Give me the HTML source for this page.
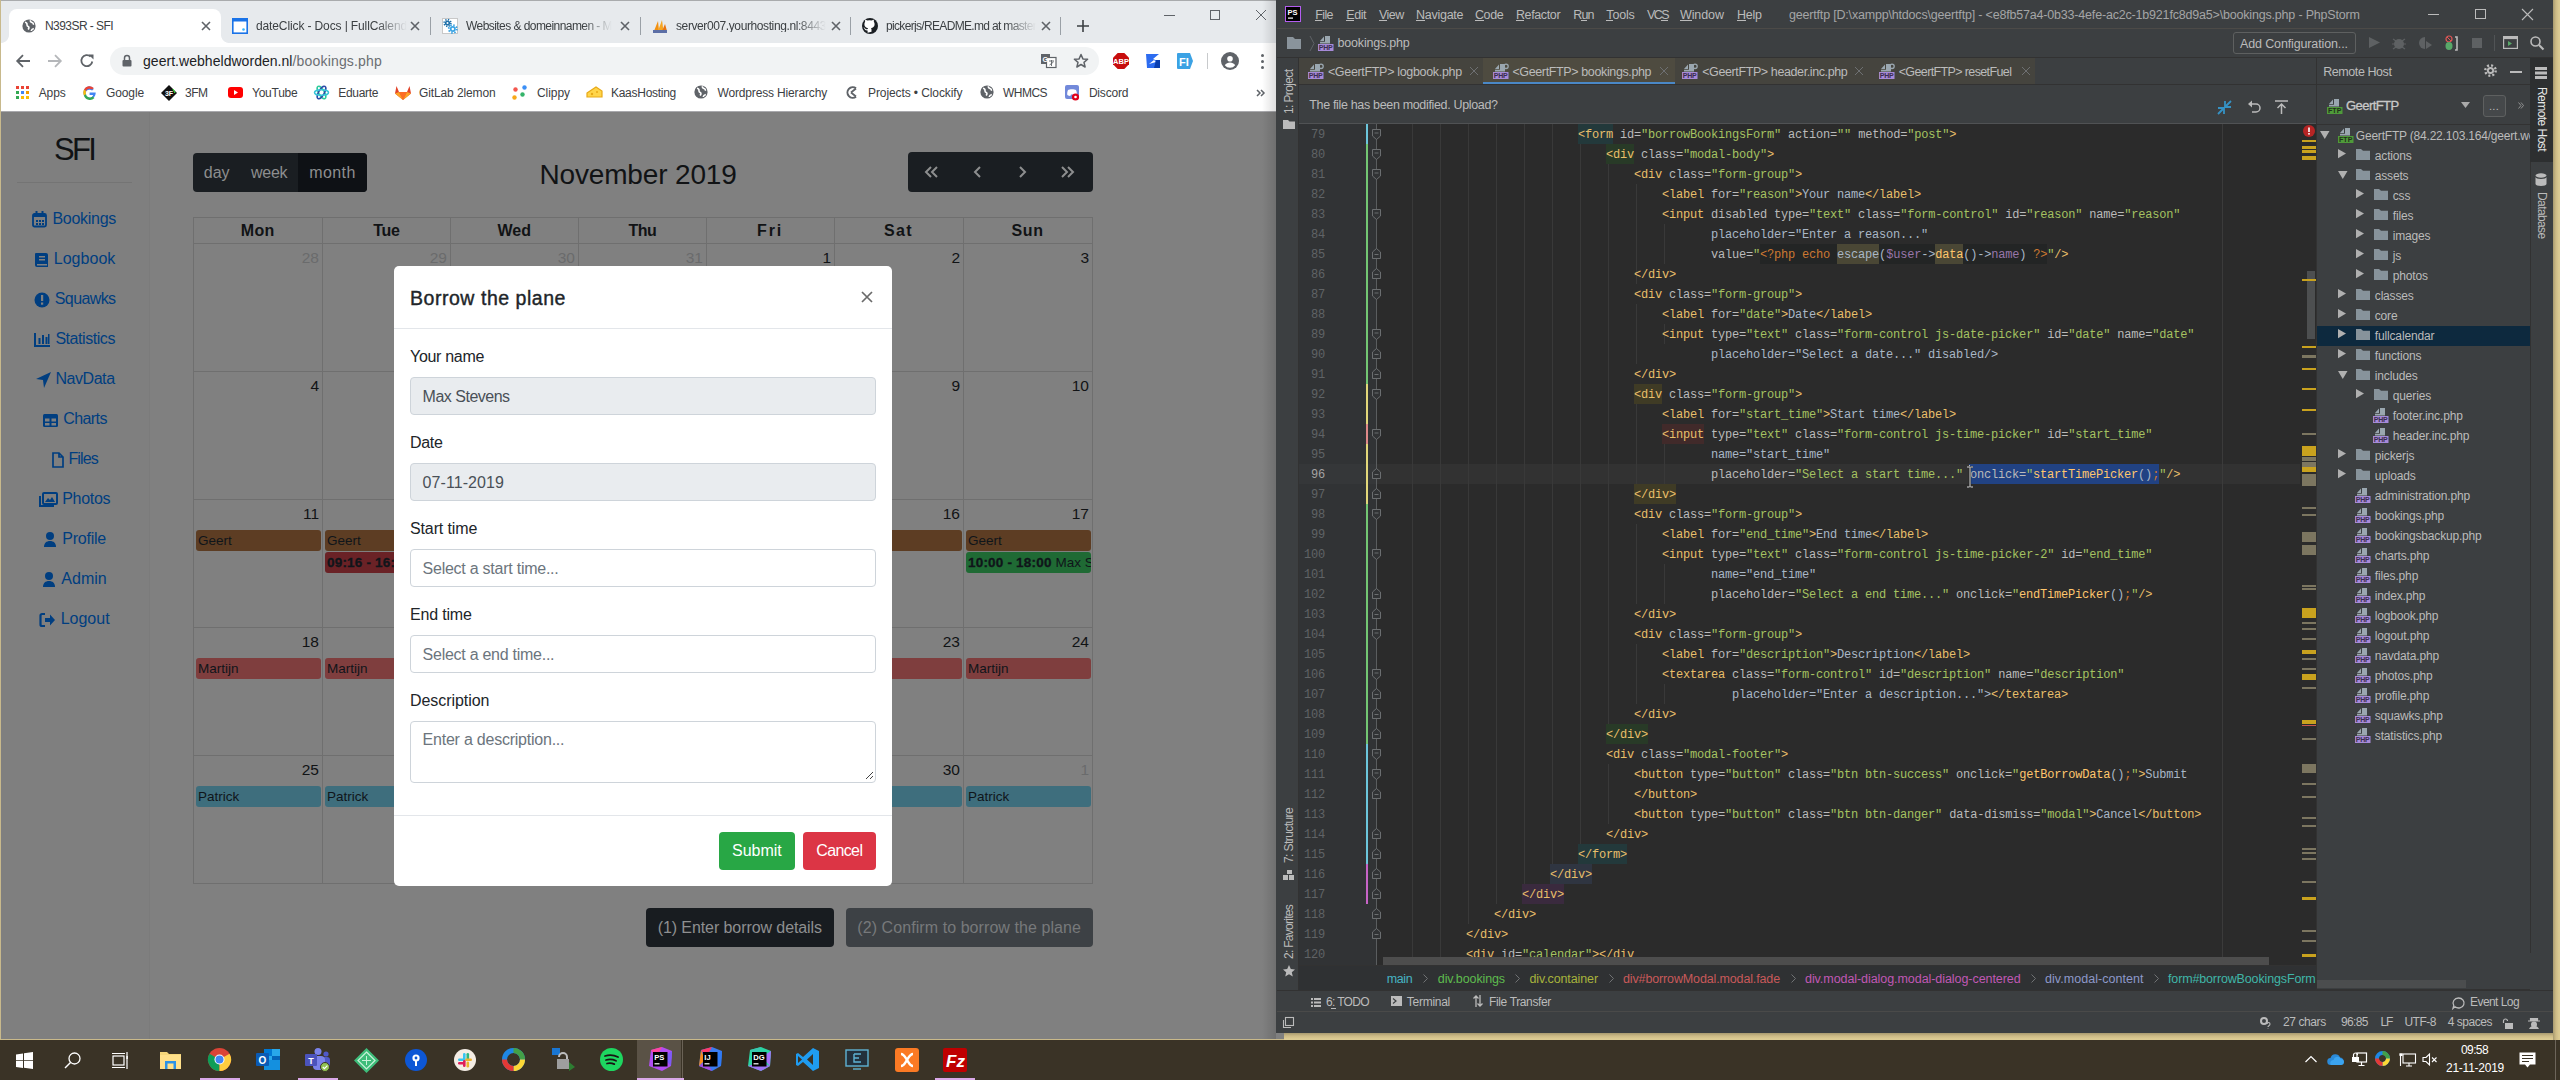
<!DOCTYPE html>
<html><head><meta charset="utf-8"><title>SFI</title>
<style>
html,body{margin:0;padding:0;width:2560px;height:1080px;overflow:hidden;background:#d8c690;font-family:"Liberation Sans",sans-serif}
*{box-sizing:border-box}
.a{position:absolute;white-space:pre}
.m{font-family:"Liberation Mono",monospace}
svg{position:absolute;overflow:visible}
</style></head><body>
<div style="position:absolute;left:1284px;top:1033px;width:1276px;height:7px;background:linear-gradient(180deg,#a89a6f,#cdbb86 3px,#dccb93 6px)"></div><div style="position:absolute;left:2553px;top:0;width:7px;height:1040px;background:linear-gradient(90deg,#a89a6f,#cdbb86 3px,#dccb93 6px)"></div><div id="chrome" style="position:absolute;left:0;top:0;width:1284px;height:1039px;background:#808080;overflow:hidden">
<div style="position:absolute;left:0px;top:0px;width:1284px;height:43px;background:#e7eaed"></div>
<div style="position:absolute;left:0px;top:0px;width:1284px;height:1px;background:#a9abad"></div>
<div style="position:absolute;left:0px;top:0px;width:1px;height:1039px;background:#c8b98c"></div>
<div style="position:absolute;left:9px;top:9px;width:212px;height:35px;background:#fff;border-radius:8px 8px 0 0"></div>
<div style="position:absolute;left:1px;top:35px;width:8px;height:8px;background:radial-gradient(circle at 0 0,#e7eaed 7.5px,#fff 8.3px)"></div>
<div style="position:absolute;left:221px;top:35px;width:8px;height:8px;background:radial-gradient(circle at 100% 0,#e7eaed 7.5px,#fff 8.3px)"></div>
<svg style="left:22px;top:19px;" width="14" height="14" viewBox="0 0 14 14"><circle cx="7" cy="7" r="6.6" fill="#5f6368"/><path d="M3 3.2c1.5.3 2.2 1.4 2 2.6-.2 1 .9 1.6 1.7 2.1.5.4.2 1.7-.6 2.6M8.5 1.2c-.3 1.3.4 2 1.5 2.3 1 .3 1.7 1.2 1.3 2.3M9.2 12c.2-1.4 1.2-2.2 2.6-2.6" fill="none" stroke="#fff" stroke-width="1.6"/></svg>
<div class="a" style="left:45.00px;top:19.84px;font-size:12px;line-height:1;color:#3c4043;letter-spacing:-0.558px;">N393SR - SFI</div>
<svg style="left:200.5px;top:21px;" width="10" height="10" viewBox="0 0 10 10"><path d="M1 1l8 8M9 1L1 9" stroke="#5f6368" stroke-width="1.6"/></svg>
<svg style="left:232px;top:18px;" width="16" height="16" viewBox="0 0 16 16"><rect x="0.8" y="0.8" width="14.4" height="14.4" fill="#fff" stroke="#1a73e8" stroke-width="1.6"/><rect x="0" y="0" width="16" height="3.5" fill="#1a73e8"/><circle cx="11.5" cy="11.5" r="1.3" fill="#33b5ff"/></svg>
<div class="a" style="left:256.00px;top:19.84px;font-size:12px;line-height:1;color:#3c4043;letter-spacing:-0.121px;width:151px;overflow:hidden;-webkit-mask-image:linear-gradient(90deg,#000 80%,transparent);">dateClick - Docs | FullCalend</div>
<svg style="left:410px;top:21px;" width="10" height="10" viewBox="0 0 10 10"><path d="M1 1l8 8M9 1L1 9" stroke="#5f6368" stroke-width="1.6"/></svg>
<div style="position:absolute;left:430px;top:17px;width:1px;height:18px;background:#9aa0a6"></div>
<svg style="left:442px;top:18px;" width="16" height="16" viewBox="0 0 16 16"><rect x="0.5" y="0.5" width="15" height="15" fill="#fff" stroke="#c8c8c8" stroke-width="1"/><circle cx="5.5" cy="5" r="2.6" fill="#1e6fa8"/><circle cx="5.5" cy="5" r="3.4" fill="none" stroke="#1e6fa8" stroke-width="1.6" stroke-dasharray="1.3 1.37"/><circle cx="5.5" cy="5" r="1" fill="#fff"/><circle cx="10.8" cy="11" r="3" fill="#3aa3e3"/><circle cx="10.8" cy="11" r="4" fill="none" stroke="#3aa3e3" stroke-width="1.8" stroke-dasharray="1.5 1.64"/><circle cx="10.8" cy="11" r="1.2" fill="#fff"/></svg>
<div class="a" style="left:466.00px;top:19.84px;font-size:12px;line-height:1;color:#3c4043;letter-spacing:-0.558px;width:146px;overflow:hidden;-webkit-mask-image:linear-gradient(90deg,#000 80%,transparent);">Websites &amp; domeinnamen - M</div>
<svg style="left:620px;top:21px;" width="10" height="10" viewBox="0 0 10 10"><path d="M1 1l8 8M9 1L1 9" stroke="#5f6368" stroke-width="1.6"/></svg>
<div style="position:absolute;left:640px;top:17px;width:1px;height:18px;background:#9aa0a6"></div>
<svg style="left:652px;top:18px;" width="16" height="16" viewBox="0 0 16 16"><path d="M2 13L6 3l1 10z" fill="#f29111"/><path d="M6 13l4-11 1.5 11z" fill="#f6a623"/><path d="M10 13l3-7 2 7z" fill="#e87511"/><rect x="1" y="12" width="14" height="3" fill="#5c6ea5"/></svg>
<div class="a" style="left:676.00px;top:19.84px;font-size:12px;line-height:1;color:#3c4043;letter-spacing:-0.395px;width:150px;overflow:hidden;-webkit-mask-image:linear-gradient(90deg,#000 80%,transparent);">server007.yourhosting.nl:8443</div>
<svg style="left:830.5px;top:21px;" width="10" height="10" viewBox="0 0 10 10"><path d="M1 1l8 8M9 1L1 9" stroke="#5f6368" stroke-width="1.6"/></svg>
<div style="position:absolute;left:850px;top:17px;width:1px;height:18px;background:#9aa0a6"></div>
<svg style="left:862px;top:18px;" width="16" height="16" viewBox="0 0 16 16"><circle cx="8" cy="8" r="8" fill="#1b1f23"/><path d="M5.6 14.8v-2.2c-2.3.2-2.8-1.3-2.8-1.3-.4-.9-.9-1.2-.9-1.2-.7-.5.1-.5.1-.5.8.1 1.2.8 1.2.8.7 1.2 1.9.9 2.4.7.1-.5.3-.9.5-1.1-1.8-.2-3.7-.9-3.7-4 0-.9.3-1.6.8-2.2-.1-.2-.4-1 .1-2.1 0 0 .7-.2 2.2.8a7.5 7.5 0 0 1 4 0c1.5-1 2.2-.8 2.2-.8.4 1.1.2 1.9.1 2.1.5.6.8 1.3.8 2.2 0 3.1-1.9 3.8-3.7 4 .3.3.6.8.6 1.5v2.2z" fill="#fff"/></svg>
<div class="a" style="left:886.00px;top:19.84px;font-size:12px;line-height:1;color:#3c4043;letter-spacing:-0.668px;width:150px;overflow:hidden;-webkit-mask-image:linear-gradient(90deg,#000 80%,transparent);">pickerjs/README.md at master</div>
<svg style="left:1040.5px;top:21px;" width="10" height="10" viewBox="0 0 10 10"><path d="M1 1l8 8M9 1L1 9" stroke="#5f6368" stroke-width="1.6"/></svg>
<div style="position:absolute;left:1060px;top:17px;width:1px;height:18px;background:#9aa0a6"></div>
<svg style="left:1077px;top:20px;" width="12" height="12" viewBox="0 0 12 12"><path d="M6 0v12M0 6h12" stroke="#3c4043" stroke-width="1.6"/></svg>
<div style="position:absolute;left:1164px;top:15px;width:11px;height:1px;background:#5f6368"></div>
<div style="position:absolute;left:1210px;top:10px;width:10px;height:10px;border:1px solid #5f6368"></div>
<svg style="left:1256px;top:10px;" width="10" height="10" viewBox="0 0 10 10"><path d="M0 0l10 10M10 0L0 10" stroke="#5f6368" stroke-width="1"/></svg>
<div style="position:absolute;left:1px;top:43px;width:1283px;height:68px;background:#fff"></div>
<div style="position:absolute;left:1px;top:111px;width:1283px;height:1px;background:#a9a9ad"></div>
<svg style="left:15px;top:53px;" width="16" height="16" viewBox="0 0 16 16"><path d="M15 8H2.5M8 2.2L2.2 8 8 13.8" fill="none" stroke="#5f6368" stroke-width="1.8"/></svg>
<svg style="left:47px;top:53px;" width="16" height="16" viewBox="0 0 16 16"><path d="M1 8h12.5M8 2.2L13.8 8 8 13.8" fill="none" stroke="#b5b7ba" stroke-width="1.8"/></svg>
<svg style="left:79px;top:53px;" width="16" height="16" viewBox="0 0 16 16"><path d="M13.3 8.5A5.5 5.5 0 1 1 11.6 3.6" fill="none" stroke="#5f6368" stroke-width="1.8"/><path d="M9.5 1.5h5v5z" fill="#5f6368"/></svg>
<div style="position:absolute;left:110px;top:47px;width:989px;height:28px;background:#f1f3f4;border-radius:14px"></div>
<svg style="left:122px;top:54px;" width="10" height="13" viewBox="0 0 10 13"><path d="M2.5 6V4a2.5 2.5 0 0 1 5 0v2" fill="none" stroke="#5f6368" stroke-width="1.5"/><rect x="0.5" y="6" width="9" height="6.5" rx="1" fill="#5f6368"/></svg>
<div class="a" style="left:143.00px;top:53.85px;font-size:14px;line-height:1;color:#202124;letter-spacing:0.039px;">geert.webheldworden.nl</div>
<div class="a" style="left:292.50px;top:53.85px;font-size:14px;line-height:1;color:#6b6e72;letter-spacing:0.179px;">/bookings.php</div>
<svg style="left:1041px;top:54px;" width="16" height="14" viewBox="0 0 16 14"><rect x="0" y="0" width="9" height="10" fill="#5f6368"/><rect x="5.5" y="3.5" width="9.5" height="10" fill="#fff" stroke="#5f6368" stroke-width="1.2"/><text x="1.5" y="8" font-size="7" fill="#fff" font-family="Liberation Sans" font-weight="bold">G</text><path d="M8 7h5M10.5 6v6M8.5 11l4-3" stroke="#5f6368" stroke-width="0.9" fill="none"/></svg>
<svg style="left:1073px;top:53px;" width="16" height="16" viewBox="0 0 16 16"><path d="M8 1.5l1.9 4.4 4.7.4-3.6 3.1 1.1 4.6L8 11.5 3.9 14l1.1-4.6L1.4 6.3l4.7-.4z" fill="none" stroke="#5f6368" stroke-width="1.5" stroke-linejoin="round"/></svg>
<svg style="left:1113px;top:53px;" width="16" height="16" viewBox="0 0 16 16"><path d="M4.7 0h6.6L16 4.7v6.6L11.3 16H4.7L0 11.3V4.7z" fill="#c70d0d"/><text x="8" y="11" text-anchor="middle" font-size="7.5" font-weight="bold" fill="#fff" font-family="Liberation Sans">ABP</text></svg>
<svg style="left:1146px;top:54px;" width="14" height="14" viewBox="0 0 14 14"><path d="M0 0h13l-6 5 7 3V14H1z" fill="#2d6cf0"/><path d="M3 10l5-4 2 2z" fill="#fff"/><path d="M10 6h4v8H8z" fill="#0a3fb0"/></svg>
<svg style="left:1177px;top:53px;" width="16" height="16" viewBox="0 0 16 16"><path d="M0 1a1 1 0 0 1 1-1h12l3 8-3 8H1a1 1 0 0 1-1-1z" fill="#3ba2e4"/><text x="2" y="12.5" font-size="11" font-weight="bold" fill="#fff" font-family="Liberation Sans">FI</text></svg>
<div style="position:absolute;left:1207px;top:53px;width:1px;height:16px;background:#c8cacc"></div>
<svg style="left:1221px;top:52px;" width="18" height="18" viewBox="0 0 18 18"><circle cx="9" cy="9" r="9" fill="#5f6368"/><circle cx="9" cy="6.8" r="2.8" fill="#fff"/><path d="M3.8 13.2c1.2-1.8 3.2-2.6 5.2-2.6s4 .8 5.2 2.6A6.8 6.8 0 0 1 9 15.8a6.8 6.8 0 0 1-5.2-2.6z" fill="#fff"/></svg>
<div style="position:absolute;left:1260.7px;top:53.7px;width:3.6px;height:3.6px;background:#5f6368;border-radius:50%"></div>
<div style="position:absolute;left:1260.7px;top:59.7px;width:3.6px;height:3.6px;background:#5f6368;border-radius:50%"></div>
<div style="position:absolute;left:1260.7px;top:65.7px;width:3.6px;height:3.6px;background:#5f6368;border-radius:50%"></div>
<div class="a" style="left:38.75px;top:86.84px;font-size:12px;line-height:1;color:#3c4043;letter-spacing:-0.151px;">Apps</div>
<div class="a" style="left:106.00px;top:86.84px;font-size:12px;line-height:1;color:#3c4043;letter-spacing:-0.116px;">Google</div>
<div class="a" style="left:185.00px;top:86.84px;font-size:12px;line-height:1;color:#3c4043;letter-spacing:-0.500px;">3FM</div>
<div class="a" style="left:252.00px;top:86.84px;font-size:12px;line-height:1;color:#3c4043;letter-spacing:-0.237px;">YouTube</div>
<div class="a" style="left:338.30px;top:86.84px;font-size:12px;line-height:1;color:#3c4043;letter-spacing:-0.333px;">Eduarte</div>
<div class="a" style="left:419.00px;top:86.84px;font-size:12px;line-height:1;color:#3c4043;letter-spacing:-0.112px;">GitLab 2lemon</div>
<div class="a" style="left:537.00px;top:86.84px;font-size:12px;line-height:1;color:#3c4043;letter-spacing:-0.058px;">Clippy</div>
<div class="a" style="left:611.00px;top:86.84px;font-size:12px;line-height:1;color:#3c4043;letter-spacing:-0.277px;">KaasHosting</div>
<div class="a" style="left:717.50px;top:86.84px;font-size:12px;line-height:1;color:#3c4043;letter-spacing:-0.157px;">Wordpress Hierarchy</div>
<div class="a" style="left:868.00px;top:86.84px;font-size:12px;line-height:1;color:#3c4043;letter-spacing:-0.091px;">Projects • Clockify</div>
<div class="a" style="left:1003.00px;top:86.84px;font-size:12px;line-height:1;color:#3c4043;letter-spacing:-0.532px;">WHMCS</div>
<div class="a" style="left:1088.90px;top:86.84px;font-size:12px;line-height:1;color:#3c4043;letter-spacing:-0.197px;">Discord</div>
<svg style="left:16px;top:86px;" width="13" height="13" viewBox="0 0 13 13"><rect x="0" y="0" width="3" height="3" fill="#ea4335"/><rect x="5" y="0" width="3" height="3" fill="#ea4335"/><rect x="10" y="0" width="3" height="3" fill="#ea4335"/><rect x="0" y="5" width="3" height="3" fill="#34a853"/><rect x="5" y="5" width="3" height="3" fill="#4285f4"/><rect x="10" y="5" width="3" height="3" fill="#f29900"/><rect x="0" y="10" width="3" height="3" fill="#34a853"/><rect x="5" y="10" width="3" height="3" fill="#fbbc05"/><rect x="10" y="10" width="3" height="3" fill="#fbbc05"/></svg>
<svg style="left:83px;top:86px;" width="13" height="13" viewBox="0 0 13 13"><path d="M12.6 6.6H6.6v2.3h3.5c-.3 1.6-1.7 2.6-3.5 2.6a3.9 3.9 0 0 1 0-7.8c1 0 1.8.3 2.5.9l1.7-1.7A6.4 6.4 0 0 0 6.6.3a6.3 6.3 0 1 0 0 12.6c3.6 0 6.1-2.5 6.1-6.1z" fill="#4285f4"/><path d="M1 3.5l2 1.5A3.9 3.9 0 0 1 9.1 3.6l1.7-1.7A6.3 6.3 0 0 0 1 3.5z" fill="#ea4335"/><path d="M.9 9.4L3 7.9a3.9 3.9 0 0 0 6.6 2.6l1.9 1.6A6.3 6.3 0 0 1 .9 9.4z" fill="#34a853"/><path d="M.3 6.6c0-1.1.3-2.1.7-3L3 5a3.9 3.9 0 0 0 0 2.9L.9 9.4a6.3 6.3 0 0 1-.6-2.8z" fill="#fbbc05"/></svg>
<svg style="left:161px;top:85px;" width="16" height="16" viewBox="0 0 16 16"><path d="M8 0l8 8-8 8-8-8z" fill="#111"/><text x="8" y="10.5" text-anchor="middle" font-size="7" font-weight="bold" fill="#fff" font-family="Liberation Sans">3F</text><path d="M12 4l2 4" stroke="#3f3" stroke-width="1"/></svg>
<svg style="left:228px;top:87px;" width="15" height="11" viewBox="0 0 15 11"><rect x="0" y="0" width="15" height="11" rx="3" fill="#f00"/><path d="M6 3v5l4-2.5z" fill="#fff"/></svg>
<svg style="left:314px;top:85px;" width="15" height="15" viewBox="0 0 15 15"><ellipse cx="7.5" cy="7.5" rx="7" ry="2.8" fill="none" stroke="#2ecc9a" stroke-width="1.5" transform="rotate(60 7.5 7.5)"/><ellipse cx="7.5" cy="7.5" rx="7" ry="2.8" fill="none" stroke="#2b4aa8" stroke-width="1.5" transform="rotate(-60 7.5 7.5)"/><ellipse cx="7.5" cy="7.5" rx="7" ry="2.8" fill="none" stroke="#35c4d8" stroke-width="1.5"/></svg>
<svg style="left:395px;top:85px;" width="16" height="15" viewBox="0 0 16 15"><path d="M8 15L0 8.5 1.5 1 4 7h8l2.5-6L16 8.5z" fill="#e24329"/><path d="M8 15L4 7h8z" fill="#fc6d26"/><path d="M0 8.5L4 7l4 8z" fill="#fca326"/><path d="M16 8.5L12 7l-4 8z" fill="#fca326"/></svg>
<svg style="left:512px;top:85px;" width="15" height="15" viewBox="0 0 15 15"><circle cx="3.5" cy="4.5" r="2.2" fill="#f4574e"/><circle cx="12.5" cy="2.5" r="2.2" fill="#3b8ff6"/><circle cx="10.5" cy="9.5" r="2.2" fill="#34b46a"/><circle cx="2.5" cy="12.5" r="2.2" fill="#f7a81a"/></svg>
<svg style="left:586px;top:85px;" width="17" height="15" viewBox="0 0 17 15"><path d="M1 8l9-6 6 4v6H1z" fill="#ffd54a" stroke="#e8a917" stroke-width="1.2"/><circle cx="6" cy="9" r="1.2" fill="#e8a917"/><circle cx="11" cy="7" r="1" fill="#e8a917"/></svg>
<svg style="left:694px;top:85px;" width="14" height="14" viewBox="0 0 14 14"><circle cx="7" cy="7" r="6.6" fill="#5f6368"/><path d="M3 3.2c1.5.3 2.2 1.4 2 2.6-.2 1 .9 1.6 1.7 2.1.5.4.2 1.7-.6 2.6M8.5 1.2c-.3 1.3.4 2 1.5 2.3 1 .3 1.7 1.2 1.3 2.3M9.2 12c.2-1.4 1.2-2.2 2.6-2.6" fill="none" stroke="#fff" stroke-width="1.6"/></svg>
<svg style="left:845px;top:85px;" width="15" height="15" viewBox="0 0 15 15"><path d="M11 3.3A5.3 5.3 0 1 0 11 11.7" fill="none" stroke="#5f6368" stroke-width="2"/><path d="M6 7.5l5-4M6 7.5l5 4" stroke="#5f6368" stroke-width="1.8"/></svg>
<svg style="left:980px;top:85px;" width="14" height="14" viewBox="0 0 14 14"><circle cx="7" cy="7" r="6.6" fill="#5f6368"/><path d="M3 3.2c1.5.3 2.2 1.4 2 2.6-.2 1 .9 1.6 1.7 2.1.5.4.2 1.7-.6 2.6M8.5 1.2c-.3 1.3.4 2 1.5 2.3 1 .3 1.7 1.2 1.3 2.3M9.2 12c.2-1.4 1.2-2.2 2.6-2.6" fill="none" stroke="#fff" stroke-width="1.6"/></svg>
<svg style="left:1065px;top:85px;" width="16" height="16" viewBox="0 0 16 16"><rect x="0" y="0" width="14" height="14" rx="2" fill="#7289da"/><path d="M3 5c1.5-1 6.5-1 8 0 .8 1.5 1 3.5.7 5-1 .8-2 1-3 1L8 9.5 6 9.5 5.3 11c-1 0-2-.3-3-1-.3-1.5 0-3.5.7-5z" fill="#fff"/><circle cx="10.5" cy="12" r="3.6" fill="#e0001b"/><circle cx="10.5" cy="12" r="1.3" fill="#fff"/></svg>
<svg style="left:1256px;top:89px;" width="9" height="8" viewBox="0 0 9 8"><path d="M1 1l3 3-3 3M5 1l3 3-3 3" fill="none" stroke="#5f6368" stroke-width="1.5"/></svg>
</div><div style="position:absolute;left:1px;top:112px;width:1275px;height:927px;overflow:hidden;background:#808080">
<div style="position:absolute;left:0px;top:0px;width:149px;height:927px;background:#7f7f7f;border-right:1px solid #7b7b7b"></div>
<div class="a" style="left:53.00px;top:21.56px;font-size:31px;line-height:1;color:#111315;letter-spacing:-2.742px;">SFI</div>
<div style="position:absolute;left:16px;top:70px;width:115px;height:1px;background:#747474"></div>
<div class="a" style="left:51.40px;top:99.46px;font-size:16px;line-height:1;color:#003e80;letter-spacing:-0.278px;">Bookings</div>
<div class="a" style="left:52.70px;top:139.46px;font-size:16px;line-height:1;color:#003e80;letter-spacing:0.044px;">Logbook</div>
<div class="a" style="left:53.80px;top:179.46px;font-size:16px;line-height:1;color:#003e80;letter-spacing:-0.617px;">Squawks</div>
<div class="a" style="left:54.40px;top:219.46px;font-size:16px;line-height:1;color:#003e80;letter-spacing:-0.442px;">Statistics</div>
<div class="a" style="left:54.40px;top:259.46px;font-size:16px;line-height:1;color:#003e80;letter-spacing:-0.436px;">NavData</div>
<div class="a" style="left:62.20px;top:299.46px;font-size:16px;line-height:1;color:#003e80;letter-spacing:-0.571px;">Charts</div>
<div class="a" style="left:67.40px;top:339.46px;font-size:16px;line-height:1;color:#003e80;letter-spacing:-0.856px;">Files</div>
<div class="a" style="left:61.20px;top:379.46px;font-size:16px;line-height:1;color:#003e80;letter-spacing:-0.302px;">Photos</div>
<div class="a" style="left:61.20px;top:419.46px;font-size:16px;line-height:1;color:#003e80;letter-spacing:-0.222px;">Profile</div>
<div class="a" style="left:60.30px;top:459.46px;font-size:16px;line-height:1;color:#003e80;letter-spacing:0.010px;">Admin</div>
<div class="a" style="left:59.70px;top:499.46px;font-size:16px;line-height:1;color:#003e80;letter-spacing:-0.006px;">Logout</div>
<svg style="left:31px;top:99px;" width="16" height="16" viewBox="0 0 16 16"><rect x="1" y="3" width="13" height="12.5" rx="1.5" fill="none" stroke="#003e80" stroke-width="1.8"/><rect x="1" y="3" width="13" height="3" fill="#003e80"/><rect x="3.5" y="0" width="2" height="4" fill="#003e80"/><rect x="9.5" y="0" width="2" height="4" fill="#003e80"/><g fill="#003e80"><rect x="4" y="9" width="2" height="2"/><rect x="7" y="9" width="2" height="2"/><rect x="10" y="9" width="2" height="2"/><rect x="4" y="12" width="2" height="2"/><rect x="7" y="12" width="2" height="2"/><rect x="10" y="12" width="2" height="2"/></g></svg>
<svg style="left:33px;top:139px;" width="16" height="16" viewBox="0 0 16 16"><path d="M2 2h10a2 2 0 0 1 2 2v12H3a2 2 0 0 1-2-2V3a1 1 0 0 1 1-1z" fill="#003e80"/><rect x="5" y="5" width="6" height="1.5" fill="#808080"/><rect x="5" y="8" width="6" height="1.5" fill="#808080"/><rect x="3" y="13" width="10" height="1.5" fill="#808080"/></svg>
<svg style="left:33px;top:179px;" width="16" height="16" viewBox="0 0 16 16"><circle cx="8" cy="9" r="7.5" fill="#003e80"/><rect x="7" y="4" width="2.2" height="6" fill="#808080"/><rect x="7" y="11.5" width="2.2" height="2.2" fill="#808080"/></svg>
<svg style="left:33px;top:219px;" width="16" height="16" viewBox="0 0 16 16"><path d="M1 2v13h15" fill="none" stroke="#003e80" stroke-width="2"/><rect x="4.5" y="7" width="2" height="6" fill="#003e80"/><rect x="8" y="4" width="2" height="9" fill="#003e80"/><rect x="11.5" y="6" width="2" height="7" fill="#003e80"/><rect x="14" y="3" width="1.5" height="10" fill="#003e80"/></svg>
<svg style="left:33.6px;top:259px;" width="16" height="16" viewBox="0 0 16 16"><path d="M16 1L1 8l7 1 1 8z" fill="#003e80"/></svg>
<svg style="left:41px;top:299px;" width="16" height="16" viewBox="0 0 16 16"><rect x="1" y="3" width="15" height="13" rx="1.5" fill="#003e80"/><rect x="3" y="7.5" width="4.5" height="3" fill="#808080"/><rect x="9.5" y="7.5" width="4.5" height="3" fill="#808080"/><rect x="3" y="12" width="4.5" height="2.5" fill="#808080"/><rect x="9.5" y="12" width="4.5" height="2.5" fill="#808080"/></svg>
<svg style="left:50px;top:339px;" width="16" height="16" viewBox="0 0 16 16"><path d="M2 2h6l4 4v10H2z M8 2v4h4" fill="none" stroke="#003e80" stroke-width="1.7"/></svg>
<svg style="left:38px;top:379px;" width="19" height="16" viewBox="0 0 19 16"><rect x="4" y="2" width="14" height="11" rx="1" fill="none" stroke="#003e80" stroke-width="2"/><path d="M6 11l3-4 2 2 2-3 3 5z" fill="#003e80"/><path d="M1 5v10h14" fill="none" stroke="#003e80" stroke-width="2"/></svg>
<svg style="left:42px;top:419px;" width="16" height="16" viewBox="0 0 16 16"><circle cx="7" cy="5" r="4" fill="#003e80"/><path d="M1 16c0-4 2.5-6 6-6s6 2 6 6z" fill="#003e80"/></svg>
<svg style="left:41.4px;top:459px;" width="16" height="16" viewBox="0 0 16 16"><circle cx="7" cy="5" r="4" fill="#003e80"/><path d="M1 16c0-4 2.5-6 6-6s6 2 6 6z" fill="#003e80"/></svg>
<svg style="left:38.4px;top:499px;" width="16" height="16" viewBox="0 0 16 16"><path d="M6 3H3a1.5 1.5 0 0 0-1.5 1.5v9A1.5 1.5 0 0 0 3 15h3" fill="none" stroke="#003e80" stroke-width="2.2"/><path d="M6 7h5V3.5l5 5.5-5 5.5V11H6z" fill="#003e80"/></svg>
<div style="position:absolute;left:192px;top:41px;width:174px;height:39px;background:#1a1e22;border-radius:4px"></div>
<div style="position:absolute;left:297px;top:41px;width:69px;height:39px;background:#0e1115;border-radius:0 4px 4px 0"></div>
<div class="a" style="left:202.80px;top:52.96px;font-size:16px;line-height:1;color:#8d8e8f;letter-spacing:-0.066px;">day</div>
<div class="a" style="left:250.00px;top:52.96px;font-size:16px;line-height:1;color:#8d8e8f;letter-spacing:-0.263px;">week</div>
<div class="a" style="left:308.20px;top:52.96px;font-size:16px;line-height:1;color:#8d8e8f;letter-spacing:0.406px;">month</div>
<div class="a" style="left:538.40px;top:48.50px;font-size:28px;line-height:1;color:#111315;letter-spacing:-0.148px;">November 2019</div>
<div style="position:absolute;left:907px;top:40px;width:185px;height:40px;background:#1a1e22;border-radius:4px"></div>
<svg style="left:923px;top:53px;" width="16" height="14" viewBox="0 0 16 14"><path d="M7 2L2 7l5 5M13 2L8 7l5 5" fill="none" stroke="#8d8e8f" stroke-width="2"/></svg>
<svg style="left:971px;top:53px;" width="12" height="14" viewBox="0 0 12 14"><path d="M8 2L3 7l5 5" fill="none" stroke="#8d8e8f" stroke-width="2"/></svg>
<svg style="left:1016px;top:53px;" width="12" height="14" viewBox="0 0 12 14"><path d="M3 2l5 5-5 5" fill="none" stroke="#8d8e8f" stroke-width="2"/></svg>
<svg style="left:1059px;top:53px;" width="16" height="14" viewBox="0 0 16 14"><path d="M2 2l5 5-5 5M8 2l5 5-5 5" fill="none" stroke="#8d8e8f" stroke-width="2"/></svg>
<div style="position:absolute;left:192px;top:105px;width:900px;height:667px;border:1px solid #6f6f6f"></div>
<div style="position:absolute;left:321px;top:105px;width:1px;height:667px;background:#6f6f6f"></div>
<div style="position:absolute;left:449px;top:105px;width:1px;height:667px;background:#6f6f6f"></div>
<div style="position:absolute;left:577px;top:105px;width:1px;height:667px;background:#6f6f6f"></div>
<div style="position:absolute;left:705px;top:105px;width:1px;height:667px;background:#6f6f6f"></div>
<div style="position:absolute;left:833px;top:105px;width:1px;height:667px;background:#6f6f6f"></div>
<div style="position:absolute;left:962px;top:105px;width:1px;height:667px;background:#6f6f6f"></div>
<div style="position:absolute;left:192px;top:131px;width:899px;height:1px;background:#6f6f6f"></div>
<div style="position:absolute;left:192px;top:259px;width:899px;height:1px;background:#6f6f6f"></div>
<div style="position:absolute;left:192px;top:387px;width:899px;height:1px;background:#6f6f6f"></div>
<div style="position:absolute;left:192px;top:515px;width:899px;height:1px;background:#6f6f6f"></div>
<div style="position:absolute;left:192px;top:643px;width:899px;height:1px;background:#6f6f6f"></div>
<div class="a" style="left:239.80px;top:110.86px;font-size:16px;line-height:1;color:#111315;font-weight:bold;letter-spacing:0.308px;">Mon</div>
<div class="a" style="left:372.20px;top:110.86px;font-size:16px;line-height:1;color:#111315;font-weight:bold;letter-spacing:-0.319px;">Tue</div>
<div class="a" style="left:496.50px;top:110.86px;font-size:16px;line-height:1;color:#111315;font-weight:bold;letter-spacing:0.005px;">Wed</div>
<div class="a" style="left:627.50px;top:110.86px;font-size:16px;line-height:1;color:#111315;font-weight:bold;letter-spacing:-0.540px;">Thu</div>
<div class="a" style="left:756.00px;top:110.86px;font-size:16px;line-height:1;color:#111315;font-weight:bold;letter-spacing:1.852px;">Fri</div>
<div class="a" style="left:883.00px;top:110.86px;font-size:16px;line-height:1;color:#111315;font-weight:bold;letter-spacing:1.367px;">Sat</div>
<div class="a" style="left:1010.50px;top:110.86px;font-size:16px;line-height:1;color:#111315;font-weight:bold;letter-spacing:0.594px;">Sun</div>
<div class="a" style="left:300.76px;top:138.48px;font-size:15.5px;line-height:1;color:#6a6b6c;">28</div>
<div class="a" style="left:428.76px;top:138.48px;font-size:15.5px;line-height:1;color:#6a6b6c;">29</div>
<div class="a" style="left:556.76px;top:138.48px;font-size:15.5px;line-height:1;color:#6a6b6c;">30</div>
<div class="a" style="left:684.76px;top:138.48px;font-size:15.5px;line-height:1;color:#6a6b6c;">31</div>
<div class="a" style="left:821.38px;top:138.48px;font-size:15.5px;line-height:1;color:#111315;">1</div>
<div class="a" style="left:950.38px;top:138.48px;font-size:15.5px;line-height:1;color:#111315;">2</div>
<div class="a" style="left:1079.38px;top:138.48px;font-size:15.5px;line-height:1;color:#111315;">3</div>
<div class="a" style="left:309.38px;top:266.48px;font-size:15.5px;line-height:1;color:#111315;">4</div>
<div class="a" style="left:437.38px;top:266.48px;font-size:15.5px;line-height:1;color:#111315;">5</div>
<div class="a" style="left:565.38px;top:266.48px;font-size:15.5px;line-height:1;color:#111315;">6</div>
<div class="a" style="left:693.38px;top:266.48px;font-size:15.5px;line-height:1;color:#111315;">7</div>
<div class="a" style="left:821.38px;top:266.48px;font-size:15.5px;line-height:1;color:#111315;">8</div>
<div class="a" style="left:950.38px;top:266.48px;font-size:15.5px;line-height:1;color:#111315;">9</div>
<div class="a" style="left:1070.76px;top:266.48px;font-size:15.5px;line-height:1;color:#111315;">10</div>
<div class="a" style="left:301.91px;top:394.48px;font-size:15.5px;line-height:1;color:#111315;">11</div>
<div class="a" style="left:428.76px;top:394.48px;font-size:15.5px;line-height:1;color:#111315;">12</div>
<div class="a" style="left:556.76px;top:394.48px;font-size:15.5px;line-height:1;color:#111315;">13</div>
<div class="a" style="left:684.76px;top:394.48px;font-size:15.5px;line-height:1;color:#111315;">14</div>
<div class="a" style="left:812.76px;top:394.48px;font-size:15.5px;line-height:1;color:#111315;">15</div>
<div class="a" style="left:941.76px;top:394.48px;font-size:15.5px;line-height:1;color:#111315;">16</div>
<div class="a" style="left:1070.76px;top:394.48px;font-size:15.5px;line-height:1;color:#111315;">17</div>
<div class="a" style="left:300.76px;top:522.48px;font-size:15.5px;line-height:1;color:#111315;">18</div>
<div class="a" style="left:428.76px;top:522.48px;font-size:15.5px;line-height:1;color:#111315;">19</div>
<div class="a" style="left:556.76px;top:522.48px;font-size:15.5px;line-height:1;color:#111315;">20</div>
<div class="a" style="left:684.76px;top:522.48px;font-size:15.5px;line-height:1;color:#111315;">21</div>
<div class="a" style="left:812.76px;top:522.48px;font-size:15.5px;line-height:1;color:#111315;">22</div>
<div class="a" style="left:941.76px;top:522.48px;font-size:15.5px;line-height:1;color:#111315;">23</div>
<div class="a" style="left:1070.76px;top:522.48px;font-size:15.5px;line-height:1;color:#111315;">24</div>
<div class="a" style="left:300.76px;top:650.48px;font-size:15.5px;line-height:1;color:#111315;">25</div>
<div class="a" style="left:428.76px;top:650.48px;font-size:15.5px;line-height:1;color:#111315;">26</div>
<div class="a" style="left:556.76px;top:650.48px;font-size:15.5px;line-height:1;color:#111315;">27</div>
<div class="a" style="left:684.76px;top:650.48px;font-size:15.5px;line-height:1;color:#111315;">28</div>
<div class="a" style="left:812.76px;top:650.48px;font-size:15.5px;line-height:1;color:#111315;">29</div>
<div class="a" style="left:941.76px;top:650.48px;font-size:15.5px;line-height:1;color:#111315;">30</div>
<div class="a" style="left:1079.38px;top:650.48px;font-size:15.5px;line-height:1;color:#6a6b6c;">1</div>
<div class="a" style="left:195.00px;top:418px;width:124.50px;height:21px;background:#5d3d23;border-radius:3px;overflow:hidden;font-size:13.5px;line-height:22px;color:#10151a;padding-left:2px">Geert</div>
<div class="a" style="left:195.00px;top:546px;width:124.50px;height:21px;background:#7f3e3e;border-radius:3px;overflow:hidden;font-size:13.5px;line-height:22px;color:#10151a;padding-left:2px">Martijn</div>
<div class="a" style="left:195.00px;top:674px;width:124.50px;height:21px;background:#3e6e7d;border-radius:3px;overflow:hidden;font-size:13.5px;line-height:22px;color:#10151a;padding-left:2px">Patrick</div>
<div class="a" style="left:324.00px;top:418px;width:123.50px;height:21px;background:#5d3d23;border-radius:3px;overflow:hidden;font-size:13.5px;line-height:22px;color:#10151a;padding-left:2px">Geert</div>
<div class="a" style="left:324.00px;top:546px;width:123.50px;height:21px;background:#7f3e3e;border-radius:3px;overflow:hidden;font-size:13.5px;line-height:22px;color:#10151a;padding-left:2px">Martijn</div>
<div class="a" style="left:324.00px;top:674px;width:123.50px;height:21px;background:#3e6e7d;border-radius:3px;overflow:hidden;font-size:13.5px;line-height:22px;color:#10151a;padding-left:2px">Patrick</div>
<div class="a" style="left:452.00px;top:418px;width:123.50px;height:21px;background:#5d3d23;border-radius:3px;overflow:hidden;font-size:13.5px;line-height:22px;color:#10151a;padding-left:2px">Geert</div>
<div class="a" style="left:452.00px;top:546px;width:123.50px;height:21px;background:#7f3e3e;border-radius:3px;overflow:hidden;font-size:13.5px;line-height:22px;color:#10151a;padding-left:2px">Martijn</div>
<div class="a" style="left:452.00px;top:674px;width:123.50px;height:21px;background:#3e6e7d;border-radius:3px;overflow:hidden;font-size:13.5px;line-height:22px;color:#10151a;padding-left:2px">Patrick</div>
<div class="a" style="left:580.00px;top:418px;width:123.50px;height:21px;background:#5d3d23;border-radius:3px;overflow:hidden;font-size:13.5px;line-height:22px;color:#10151a;padding-left:2px">Geert</div>
<div class="a" style="left:580.00px;top:546px;width:123.50px;height:21px;background:#7f3e3e;border-radius:3px;overflow:hidden;font-size:13.5px;line-height:22px;color:#10151a;padding-left:2px">Martijn</div>
<div class="a" style="left:580.00px;top:674px;width:123.50px;height:21px;background:#3e6e7d;border-radius:3px;overflow:hidden;font-size:13.5px;line-height:22px;color:#10151a;padding-left:2px">Patrick</div>
<div class="a" style="left:708.00px;top:418px;width:123.50px;height:21px;background:#5d3d23;border-radius:3px;overflow:hidden;font-size:13.5px;line-height:22px;color:#10151a;padding-left:2px">Geert</div>
<div class="a" style="left:708.00px;top:546px;width:123.50px;height:21px;background:#7f3e3e;border-radius:3px;overflow:hidden;font-size:13.5px;line-height:22px;color:#10151a;padding-left:2px">Martijn</div>
<div class="a" style="left:708.00px;top:674px;width:123.50px;height:21px;background:#3e6e7d;border-radius:3px;overflow:hidden;font-size:13.5px;line-height:22px;color:#10151a;padding-left:2px">Patrick</div>
<div class="a" style="left:836.00px;top:418px;width:124.50px;height:21px;background:#5d3d23;border-radius:3px;overflow:hidden;font-size:13.5px;line-height:22px;color:#10151a;padding-left:2px">Geert</div>
<div class="a" style="left:836.00px;top:546px;width:124.50px;height:21px;background:#7f3e3e;border-radius:3px;overflow:hidden;font-size:13.5px;line-height:22px;color:#10151a;padding-left:2px">Martijn</div>
<div class="a" style="left:836.00px;top:674px;width:124.50px;height:21px;background:#3e6e7d;border-radius:3px;overflow:hidden;font-size:13.5px;line-height:22px;color:#10151a;padding-left:2px">Patrick</div>
<div class="a" style="left:965.00px;top:418px;width:124.50px;height:21px;background:#5d3d23;border-radius:3px;overflow:hidden;font-size:13.5px;line-height:22px;color:#10151a;padding-left:2px">Geert</div>
<div class="a" style="left:965.00px;top:546px;width:124.50px;height:21px;background:#7f3e3e;border-radius:3px;overflow:hidden;font-size:13.5px;line-height:22px;color:#10151a;padding-left:2px">Martijn</div>
<div class="a" style="left:965.00px;top:674px;width:124.50px;height:21px;background:#3e6e7d;border-radius:3px;overflow:hidden;font-size:13.5px;line-height:22px;color:#10151a;padding-left:2px">Patrick</div>
<div class="a" style="left:324.00px;top:440px;width:123.50px;height:21px;background:#6a2226;border-radius:3px;overflow:hidden;font-size:13.5px;line-height:22px;color:#10151a;padding-left:2px"><b style="letter-spacing:0.2px;-webkit-text-stroke:0.3px #10151a">09:16 - 16:30</b> Max Stevens</div>
<div class="a" style="left:965.00px;top:440px;width:124.50px;height:21px;background:#1f6a34;border-radius:3px;overflow:hidden;font-size:13.5px;line-height:22px;color:#10151a;padding-left:2px"><b style="letter-spacing:0.2px;-webkit-text-stroke:0.3px #10151a">10:00 - 18:00</b> Max Stevens</div>
<div style="position:absolute;left:645px;top:796px;width:188px;height:39px;background:#181c20;border-radius:4px"></div>
<div class="a" style="left:656.70px;top:807.76px;font-size:16px;line-height:1;color:#8e8f90;letter-spacing:-0.083px;">(1) Enter borrow details</div>
<div style="position:absolute;left:845px;top:796px;width:247px;height:39px;background:#3d4145;border-radius:4px"></div>
<div class="a" style="left:856.30px;top:807.76px;font-size:16px;line-height:1;color:#77797b;letter-spacing:0.073px;">(2) Confirm to borrow the plane</div>
<div style="position:absolute;left:393px;top:154px;width:498px;height:620px;background:#fff;border-radius:5px"></div>
<div class="a" style="left:409.00px;top:177.49px;font-size:19.5px;line-height:1;color:#212529;letter-spacing:0.536px;-webkit-text-stroke:0.4px #212529;">Borrow the plane</div>
<svg style="left:860px;top:179px;" width="12" height="12" viewBox="0 0 12 12"><path d="M1 1l10 10M11 1L1 11" stroke="#6a6a6a" stroke-width="1.7"/></svg>
<div style="position:absolute;left:393px;top:216px;width:498px;height:1px;background:#e3e6ea"></div>
<div class="a" style="left:409.00px;top:237.36px;font-size:16px;line-height:1;color:#212529;letter-spacing:-0.311px;">Your name</div>
<div style="position:absolute;left:409px;top:265px;width:466px;height:38px;background:#e9ecef;border:1px solid #ced4da;border-radius:4px"></div>
<div class="a" style="left:421.60px;top:276.66px;font-size:16px;line-height:1;color:#495057;letter-spacing:-0.499px;">Max Stevens</div>
<div class="a" style="left:409.00px;top:323.36px;font-size:16px;line-height:1;color:#212529;letter-spacing:-0.324px;">Date</div>
<div style="position:absolute;left:409px;top:351px;width:466px;height:38px;background:#e9ecef;border:1px solid #ced4da;border-radius:4px"></div>
<div class="a" style="left:421.60px;top:362.66px;font-size:16px;line-height:1;color:#495057;letter-spacing:0.074px;">07-11-2019</div>
<div class="a" style="left:409.00px;top:409.36px;font-size:16px;line-height:1;color:#212529;letter-spacing:-0.126px;">Start time</div>
<div style="position:absolute;left:409px;top:437px;width:466px;height:38px;background:#fff;border:1px solid #ced4da;border-radius:4px"></div>
<div class="a" style="left:421.60px;top:448.66px;font-size:16px;line-height:1;color:#6c757d;letter-spacing:-0.249px;">Select a start time...</div>
<div class="a" style="left:409.00px;top:495.36px;font-size:16px;line-height:1;color:#212529;letter-spacing:-0.180px;">End time</div>
<div style="position:absolute;left:409px;top:523px;width:466px;height:38px;background:#fff;border:1px solid #ced4da;border-radius:4px"></div>
<div class="a" style="left:421.60px;top:534.66px;font-size:16px;line-height:1;color:#6c757d;letter-spacing:-0.263px;">Select a end time...</div>
<div class="a" style="left:409.00px;top:581.36px;font-size:16px;line-height:1;color:#212529;letter-spacing:-0.066px;">Description</div>
<div style="position:absolute;left:409px;top:609px;width:466px;height:62px;background:#fff;border:1px solid #ced4da;border-radius:4px"></div>
<div class="a" style="left:421.60px;top:620.16px;font-size:16px;line-height:1;color:#6c757d;letter-spacing:-0.229px;">Enter a description...</div>
<svg style="left:863px;top:658px;" width="10" height="10" viewBox="0 0 10 10"><path d="M9 2L2 9M9 6L6 9" stroke="#444" stroke-width="1"/></svg>
<div style="position:absolute;left:393px;top:703px;width:498px;height:1px;background:#e3e6ea"></div>
<div style="position:absolute;left:718px;top:720px;width:76px;height:38px;background:#28a745;border-radius:4px"></div>
<div class="a" style="left:731.10px;top:731.06px;font-size:16px;line-height:1;color:#fff;letter-spacing:-0.033px;">Submit</div>
<div style="position:absolute;left:802px;top:720px;width:73px;height:38px;background:#dc3545;border-radius:4px"></div>
<div class="a" style="left:815.30px;top:731.06px;font-size:16px;line-height:1;color:#fff;letter-spacing:-0.634px;">Cancel</div>
</div><div style="position:absolute;left:1262px;top:0;width:14px;height:1039px;background:linear-gradient(90deg,rgba(0,0,0,0),rgba(0,0,0,0.13))"></div><div style="position:absolute;left:1276px;top:0;width:1277px;height:1033px;background:#3c3f41;overflow:hidden">
<svg style="left:9px;top:6px;" width="16" height="16" viewBox="0 0 16 16"><rect x="0.5" y="0.5" width="15" height="15" fill="#000" stroke="#b35df0" stroke-width="1"/><text x="2.5" y="8.5" font-size="7.5" font-weight="bold" fill="#fff" font-family="Liberation Sans">PS</text><rect x="3" y="11.5" width="5" height="1.2" fill="#fff"/></svg>
<div class="a" style="left:39.20px;top:9.42px;font-size:12.5px;line-height:1;color:#bbbbbb;letter-spacing:-0.585px;">File</div>
<div style="position:absolute;left:39px;top:20px;width:7px;height:1px;background:#bbbbbb"></div>
<div class="a" style="left:70.30px;top:9.42px;font-size:12.5px;line-height:1;color:#bbbbbb;letter-spacing:-0.460px;">Edit</div>
<div style="position:absolute;left:70px;top:20px;width:8px;height:1px;background:#bbbbbb"></div>
<div class="a" style="left:103.00px;top:9.42px;font-size:12.5px;line-height:1;color:#bbbbbb;letter-spacing:-0.517px;">View</div>
<div style="position:absolute;left:103px;top:20px;width:8px;height:1px;background:#bbbbbb"></div>
<div class="a" style="left:139.90px;top:9.42px;font-size:12.5px;line-height:1;color:#bbbbbb;letter-spacing:-0.242px;">Navigate</div>
<div style="position:absolute;left:140px;top:20px;width:9px;height:1px;background:#bbbbbb"></div>
<div class="a" style="left:199.00px;top:9.42px;font-size:12.5px;line-height:1;color:#bbbbbb;letter-spacing:-0.421px;">Code</div>
<div style="position:absolute;left:199px;top:20px;width:9px;height:1px;background:#bbbbbb"></div>
<div class="a" style="left:239.90px;top:9.42px;font-size:12.5px;line-height:1;color:#bbbbbb;letter-spacing:-0.367px;">Refactor</div>
<div style="position:absolute;left:240px;top:20px;width:8px;height:1px;background:#bbbbbb"></div>
<div class="a" style="left:297.20px;top:9.42px;font-size:12.5px;line-height:1;color:#bbbbbb;letter-spacing:-0.810px;">Run</div>
<div style="position:absolute;left:305px;top:20px;width:6px;height:1px;background:#bbbbbb"></div>
<div class="a" style="left:330.30px;top:9.42px;font-size:12.5px;line-height:1;color:#bbbbbb;letter-spacing:-0.156px;">Tools</div>
<div style="position:absolute;left:330px;top:20px;width:7px;height:1px;background:#bbbbbb"></div>
<div class="a" style="left:370.90px;top:9.42px;font-size:12.5px;line-height:1;color:#bbbbbb;letter-spacing:-1.534px;">VCS</div>
<div style="position:absolute;left:385px;top:20px;width:7px;height:1px;background:#bbbbbb"></div>
<div class="a" style="left:404.00px;top:9.42px;font-size:12.5px;line-height:1;color:#bbbbbb;letter-spacing:-0.110px;">Window</div>
<div style="position:absolute;left:404px;top:20px;width:12px;height:1px;background:#bbbbbb"></div>
<div class="a" style="left:461.00px;top:9.42px;font-size:12.5px;line-height:1;color:#bbbbbb;letter-spacing:-0.277px;">Help</div>
<div style="position:absolute;left:461px;top:20px;width:9px;height:1px;background:#bbbbbb"></div>
<div class="a" style="left:513.00px;top:9.42px;font-size:12.5px;line-height:1;color:#a4a5a6;letter-spacing:-0.185px;">geertftp [D:\xampp\htdocs\geertftp] - &lt;e8fb57a4-0b33-4efe-ac2c-1b921fc8d9a5&gt;\bookings.php - PhpStorm</div>
<div style="position:absolute;left:1152px;top:14px;width:11px;height:1px;background:#bbbbbb"></div>
<div style="position:absolute;left:1199px;top:9px;width:11px;height:10px;border:1px solid #bbbbbb"></div>
<svg style="left:1246px;top:9px;" width="11" height="11" viewBox="0 0 11 11"><path d="M0 0l11 11M11 0L0 11" stroke="#bbbbbb" stroke-width="1.1"/></svg>
<div style="position:absolute;left:1px;top:28px;width:1276px;height:1px;background:#4c4a47"></div>
<svg style="left:11px;top:37px;" width="14" height="12" viewBox="0 0 14 12"><path d="M0 0h6l2 2h6v10H0z" fill="#8a949c"/></svg>
<svg style="left:33px;top:36px;" width="6" height="15" viewBox="0 0 6 15"><path d="M1 0l4 7.5L1 15" fill="none" stroke="#5e6266" stroke-width="1"/></svg>
<svg style="left:42px;top:35px;" width="16" height="16" viewBox="0 0 16 16"><path d="M2 6L6 1.5V6z" fill="#9aa7b0"/><path d="M7 1h5v7.5H2V6.8h5z" fill="#9aa7b0"/><rect x="0" y="9" width="15.5" height="7" fill="#a68ad8"/><text x="7.7" y="15.4" text-anchor="middle" font-size="7" font-weight="bold" fill="#3a2d50" font-family="Liberation Sans" letter-spacing="-0.2">PHP</text></svg>
<div class="a" style="left:61.60px;top:37.22px;font-size:12.5px;line-height:1;color:#bbbbbb;letter-spacing:-0.205px;">bookings.php</div>
<div style="position:absolute;left:957px;top:32px;width:123px;height:22px;border:1px solid #5e6060;border-radius:3px"></div>
<div class="a" style="left:964.00px;top:37.62px;font-size:12.5px;line-height:1;color:#bbbbbb;letter-spacing:-0.134px;">Add Configuration...</div>
<svg style="left:1093px;top:37px;" width="11" height="11" viewBox="0 0 11 11"><path d="M0 0l11 5.5L0 11z" fill="#5e6163"/></svg>
<svg style="left:1116px;top:36px;" width="14" height="13" viewBox="0 0 14 13"><ellipse cx="7" cy="8" rx="5" ry="5" fill="#5e6163"/><path d="M1 3l3 2M13 3l-3 2M0 8h3M11 8h3M1 13l3-2M13 13l-3-2" stroke="#5e6163" stroke-width="1.2"/></svg>
<svg style="left:1142px;top:36px;" width="15" height="13" viewBox="0 0 15 13"><path d="M7 1A6 6 0 1 0 7 13V1z" fill="#5e6163"/><path d="M8 5l6 4-6 4z" fill="#5e6163"/></svg>
<svg style="left:1168px;top:35px;" width="15" height="16" viewBox="0 0 15 16"><circle cx="5" cy="4" r="3" fill="none" stroke="#e05555" stroke-width="1.2"/><path d="M3 2l4 4" stroke="#e05555" stroke-width="1"/><ellipse cx="5" cy="11" rx="3.5" ry="4" fill="#59a869"/><path d="M11 2h2v13h-2" fill="none" stroke="#bbbbbb" stroke-width="1.6"/></svg>
<div style="position:absolute;left:1196px;top:38px;width:10px;height:10px;background:#5e6163"></div>
<div style="position:absolute;left:1218px;top:35px;width:1px;height:16px;background:#515456"></div>
<svg style="left:1227px;top:36px;" width="15" height="13" viewBox="0 0 15 13"><rect x="0.6" y="0.6" width="13.8" height="11.8" fill="none" stroke="#bbbbbb" stroke-width="1.2"/><rect x="0.6" y="0.6" width="13.8" height="2.5" fill="#bbbbbb"/><path d="M5 5l4 2.5L5 10z" fill="#59a869"/></svg>
<svg style="left:1254px;top:36px;" width="14" height="14" viewBox="0 0 14 14"><circle cx="5.5" cy="5.5" r="4.5" fill="none" stroke="#bbbbbb" stroke-width="1.6"/><path d="M9 9l4.5 4.5" stroke="#bbbbbb" stroke-width="2"/></svg>
<div style="position:absolute;left:1px;top:57px;width:1276px;height:1px;background:#323232"></div>
<div style="position:absolute;left:1px;top:58px;width:22px;height:975px;background:#3c3f41;border-right:1px solid #323232"></div>
<div style="position:absolute;left:1px;top:58px;width:21px;height:64px;background:#3c3f41"></div>
<div class="a" style="left:7px;top:114px;transform:rotate(-90deg);transform-origin:0 0;font-size:12px;line-height:1;letter-spacing:-0.629px;color:#bbbbbb">1: Project</div>
<svg style="left:7px;top:120px;" width="12" height="9" viewBox="0 0 12 9"><path d="M0 0h5l1.5 1.5H12V9H0z" fill="#bbbbbb"/></svg>
<div class="a" style="left:7px;top:863px;transform:rotate(-90deg);transform-origin:0 0;font-size:12px;line-height:1;letter-spacing:-0.586px;color:#bbbbbb">7: Structure</div>
<svg style="left:7px;top:870px;" width="11" height="10" viewBox="0 0 11 10"><rect x="4" y="0" width="5" height="4" fill="#bbbbbb"/><rect x="0" y="5" width="5" height="5" fill="#bbbbbb"/><rect x="6" y="5" width="5" height="5" fill="#bbbbbb"/></svg>
<div class="a" style="left:7px;top:959px;transform:rotate(-90deg);transform-origin:0 0;font-size:12px;line-height:1;letter-spacing:-0.724px;color:#bbbbbb">2: Favorites</div>
<svg style="left:7px;top:965px;" width="12" height="12" viewBox="0 0 12 12"><path d="M6 0l1.8 4 4.2.4-3.2 2.8 1 4.3L6 9.2 2.2 11.5l1-4.3L0 4.4 4.2 4z" fill="#bbbbbb"/></svg>
<div style="position:absolute;left:23px;top:58px;width:184px;height:26px;background:#45443e"></div>
<svg style="left:31.59999999999991px;top:63px;" width="16" height="16" viewBox="0 0 16 16"><path d="M2 6L6 1.5V6z" fill="#9aa7b0"/><path d="M7 1h5v7.5H2V6.8h5z" fill="#9aa7b0"/><circle cx="13" cy="3.3" r="2.2" fill="none" stroke="#9aa7b0" stroke-width="1.3"/><rect x="0" y="9" width="15.5" height="7" fill="#a68ad8"/><text x="7.7" y="15.4" text-anchor="middle" font-size="7" font-weight="bold" fill="#3a2d50" font-family="Liberation Sans" letter-spacing="-0.2">PHP</text></svg>
<div class="a" style="left:51.90px;top:66.02px;font-size:12.5px;line-height:1;color:#bbbbbb;letter-spacing:-0.325px;">&lt;GeertFTP&gt; logbook.php</div>
<svg style="left:193.5px;top:67px;" width="8" height="8" viewBox="0 0 8 8"><path d="M0 0l8 8M8 0L0 8" stroke="#6e7072" stroke-width="1"/></svg>
<div style="position:absolute;left:207px;top:58px;width:192px;height:26px;background:#4e4b40"></div>
<svg style="left:216.79999999999995px;top:63px;" width="16" height="16" viewBox="0 0 16 16"><path d="M2 6L6 1.5V6z" fill="#9aa7b0"/><path d="M7 1h5v7.5H2V6.8h5z" fill="#9aa7b0"/><circle cx="13" cy="3.3" r="2.2" fill="none" stroke="#9aa7b0" stroke-width="1.3"/><rect x="0" y="9" width="15.5" height="7" fill="#a68ad8"/><text x="7.7" y="15.4" text-anchor="middle" font-size="7" font-weight="bold" fill="#3a2d50" font-family="Liberation Sans" letter-spacing="-0.2">PHP</text></svg>
<div class="a" style="left:236.40px;top:66.02px;font-size:12.5px;line-height:1;color:#bbbbbb;letter-spacing:-0.370px;">&lt;GeertFTP&gt; bookings.php</div>
<svg style="left:383.5999999999999px;top:67px;" width="8" height="8" viewBox="0 0 8 8"><path d="M0 0l8 8M8 0L0 8" stroke="#6e7072" stroke-width="1"/></svg>
<div style="position:absolute;left:399px;top:58px;width:195px;height:26px;background:#45443e"></div>
<svg style="left:406.4000000000001px;top:63px;" width="16" height="16" viewBox="0 0 16 16"><path d="M2 6L6 1.5V6z" fill="#9aa7b0"/><path d="M7 1h5v7.5H2V6.8h5z" fill="#9aa7b0"/><circle cx="13" cy="3.3" r="2.2" fill="none" stroke="#9aa7b0" stroke-width="1.3"/><rect x="0" y="9" width="15.5" height="7" fill="#a68ad8"/><text x="7.7" y="15.4" text-anchor="middle" font-size="7" font-weight="bold" fill="#3a2d50" font-family="Liberation Sans" letter-spacing="-0.2">PHP</text></svg>
<div class="a" style="left:426.20px;top:66.02px;font-size:12.5px;line-height:1;color:#bbbbbb;letter-spacing:-0.390px;">&lt;GeertFTP&gt; header.inc.php</div>
<svg style="left:579px;top:67px;" width="8" height="8" viewBox="0 0 8 8"><path d="M0 0l8 8M8 0L0 8" stroke="#6e7072" stroke-width="1"/></svg>
<div style="position:absolute;left:594px;top:58px;width:165px;height:26px;background:#45443e"></div>
<svg style="left:602.5px;top:63px;" width="16" height="16" viewBox="0 0 16 16"><path d="M2 6L6 1.5V6z" fill="#9aa7b0"/><path d="M7 1h5v7.5H2V6.8h5z" fill="#9aa7b0"/><circle cx="13" cy="3.3" r="2.2" fill="none" stroke="#9aa7b0" stroke-width="1.3"/><rect x="0" y="9" width="15.5" height="7" fill="#a68ad8"/><text x="7.7" y="15.4" text-anchor="middle" font-size="7" font-weight="bold" fill="#3a2d50" font-family="Liberation Sans" letter-spacing="-0.2">PHP</text></svg>
<div class="a" style="left:622.70px;top:66.02px;font-size:12.5px;line-height:1;color:#bbbbbb;letter-spacing:-0.622px;">&lt;GeertFTP&gt; resetFuel</div>
<svg style="left:746px;top:67px;" width="8" height="8" viewBox="0 0 8 8"><path d="M0 0l8 8M8 0L0 8" stroke="#6e7072" stroke-width="1"/></svg>
<div style="position:absolute;left:207px;top:82px;width:192px;height:3px;background:#4a88c7"></div>
<div style="position:absolute;left:23px;top:84px;width:1017px;height:1px;background:#323232"></div>
<div class="a" style="left:33.30px;top:98.92px;font-size:12.5px;line-height:1;color:#bbbbbb;letter-spacing:-0.335px;">The file has been modified. Upload?</div>
<svg style="left:941px;top:100px;" width="15" height="15" viewBox="0 0 15 15"><path d="M8 1v6h6M7 14V8H1" fill="none" stroke="#3592c4" stroke-width="1.8"/><path d="M14 1L8 7M1 14l6-6" stroke="#3592c4" stroke-width="1.8"/></svg>
<svg style="left:971px;top:100px;" width="14" height="14" viewBox="0 0 14 14"><path d="M3 4h6a4 4 0 0 1 0 8H5" fill="none" stroke="#bbbbbb" stroke-width="1.5"/><path d="M5 0.5L1 4l4 3.5z" fill="#bbbbbb"/></svg>
<svg style="left:999px;top:100px;" width="13" height="14" viewBox="0 0 13 14"><path d="M0 1h13" stroke="#bbbbbb" stroke-width="1.5"/><path d="M6.5 4v10M2.5 8l4-4 4 4" fill="none" stroke="#bbbbbb" stroke-width="1.5"/></svg>
<div style="position:absolute;left:23px;top:123px;width:1017px;height:1px;background:#505254"></div>
<div style="position:absolute;left:23px;top:124px;width:1017px;height:841px;background:#2b2b2b"></div>
<div style="position:absolute;left:23px;top:124px;width:78px;height:841px;background:#313335"></div>
<div style="position:absolute;left:23px;top:464px;width:78px;height:20px;background:#353739"></div>
<div style="position:absolute;left:101px;top:464px;width:923px;height:20px;background:#323232"></div>
<div style="position:absolute;left:136px;top:124px;width:1px;height:841px;background:#393939"></div>
<div style="position:absolute;left:164px;top:124px;width:1px;height:841px;background:#393939"></div>
<div style="position:absolute;left:192px;top:124px;width:1px;height:800px;background:#393939"></div>
<div style="position:absolute;left:220px;top:124px;width:1px;height:780px;background:#393939"></div>
<div style="position:absolute;left:248px;top:124px;width:1px;height:760px;background:#393939"></div>
<div style="position:absolute;left:276px;top:124px;width:1px;height:740px;background:#393939"></div>
<div style="position:absolute;left:304px;top:144px;width:1px;height:700px;background:#393939"></div>
<div style="position:absolute;left:332px;top:164px;width:1px;height:560px;background:#393939"></div>
<div style="position:absolute;left:332px;top:764px;width:1px;height:60px;background:#393939"></div>
<div style="position:absolute;left:360px;top:184px;width:1px;height:100px;background:#393939"></div>
<div style="position:absolute;left:360px;top:304px;width:1px;height:60px;background:#393939"></div>
<div style="position:absolute;left:360px;top:404px;width:1px;height:80px;background:#393939"></div>
<div style="position:absolute;left:360px;top:524px;width:1px;height:80px;background:#393939"></div>
<div style="position:absolute;left:360px;top:644px;width:1px;height:60px;background:#393939"></div>
<div style="position:absolute;left:388px;top:224px;width:1px;height:40px;background:#393939"></div>
<div style="position:absolute;left:388px;top:324px;width:1px;height:20px;background:#393939"></div>
<div style="position:absolute;left:388px;top:444px;width:1px;height:40px;background:#393939"></div>
<div style="position:absolute;left:388px;top:564px;width:1px;height:40px;background:#393939"></div>
<div style="position:absolute;left:388px;top:684px;width:1px;height:20px;background:#393939"></div>
<div style="position:absolute;left:946px;top:124px;width:1px;height:841px;background:#3b3b3b"></div>
<div style="position:absolute;left:302px;top:124px;width:35px;height:20px;background:#23393b"></div>
<div style="position:absolute;left:302px;top:844px;width:49px;height:20px;background:#23393b"></div>
<div style="position:absolute;left:330px;top:144px;width:28px;height:20px;background:#283a27"></div>
<div style="position:absolute;left:330px;top:724px;width:42px;height:20px;background:#283a27"></div>
<div style="position:absolute;left:358px;top:384px;width:28px;height:20px;background:#3f3b25"></div>
<div style="position:absolute;left:358px;top:484px;width:42px;height:20px;background:#3f3b25"></div>
<div style="position:absolute;left:386px;top:424px;width:42px;height:20px;background:#412a2a"></div>
<div style="position:absolute;left:274px;top:864px;width:42px;height:20px;background:#2f3541"></div>
<div style="position:absolute;left:246px;top:884px;width:42px;height:20px;background:#3a2a3e"></div>
<div style="position:absolute;left:484px;top:244px;width:287px;height:20px;background:#232525"></div>
<div style="position:absolute;left:561px;top:244px;width:42px;height:20px;background:#4a4735"></div>
<div style="position:absolute;left:659px;top:244px;width:28px;height:20px;background:#4a4735"></div>
<div style="position:absolute;left:693px;top:464px;width:190px;height:20px;background:#214283"></div>
<div style="position:absolute;left:90px;top:124px;width:2px;height:20px;background:#6cc6dc"></div>
<div style="position:absolute;left:90px;top:144px;width:2px;height:240px;background:#73c673"></div>
<div style="position:absolute;left:90px;top:384px;width:2px;height:40px;background:#e2d77a"></div>
<div style="position:absolute;left:90px;top:424px;width:2px;height:20px;background:#e08a8a"></div>
<div style="position:absolute;left:90px;top:444px;width:2px;height:60px;background:#e2d77a"></div>
<div style="position:absolute;left:90px;top:504px;width:2px;height:240px;background:#73c673"></div>
<div style="position:absolute;left:90px;top:744px;width:2px;height:120px;background:#6cc6dc"></div>
<div style="position:absolute;left:90px;top:864px;width:2px;height:40px;background:#c764c7"></div>
<div style="position:absolute;left:100px;top:124px;width:1px;height:841px;background:#5a5d5f"></div>
<svg style="left:96px;top:129px;" width="9" height="11" viewBox="0 0 9 11"><path d="M0.5 0.5h8v6.5L4.5 10.5 0.5 7z" fill="#313335" stroke="#6b6e70" stroke-width="1"/><path d="M2.5 4h4" stroke="#6b6e70" stroke-width="1"/></svg>
<svg style="left:96px;top:149px;" width="9" height="11" viewBox="0 0 9 11"><path d="M0.5 0.5h8v6.5L4.5 10.5 0.5 7z" fill="#313335" stroke="#6b6e70" stroke-width="1"/><path d="M2.5 4h4" stroke="#6b6e70" stroke-width="1"/></svg>
<svg style="left:96px;top:169px;" width="9" height="11" viewBox="0 0 9 11"><path d="M0.5 0.5h8v6.5L4.5 10.5 0.5 7z" fill="#313335" stroke="#6b6e70" stroke-width="1"/><path d="M2.5 4h4" stroke="#6b6e70" stroke-width="1"/></svg>
<svg style="left:96px;top:209px;" width="9" height="11" viewBox="0 0 9 11"><path d="M0.5 0.5h8v6.5L4.5 10.5 0.5 7z" fill="#313335" stroke="#6b6e70" stroke-width="1"/><path d="M2.5 4h4" stroke="#6b6e70" stroke-width="1"/></svg>
<svg style="left:96px;top:248px;" width="9" height="11" viewBox="0 0 9 11"><path d="M0.5 10.5h8V4L4.5 0.5 0.5 4z" fill="#313335" stroke="#6b6e70" stroke-width="1"/><path d="M2.5 6.5h4" stroke="#6b6e70" stroke-width="1"/></svg>
<svg style="left:96px;top:268px;" width="9" height="11" viewBox="0 0 9 11"><path d="M0.5 10.5h8V4L4.5 0.5 0.5 4z" fill="#313335" stroke="#6b6e70" stroke-width="1"/><path d="M2.5 6.5h4" stroke="#6b6e70" stroke-width="1"/></svg>
<svg style="left:96px;top:289px;" width="9" height="11" viewBox="0 0 9 11"><path d="M0.5 0.5h8v6.5L4.5 10.5 0.5 7z" fill="#313335" stroke="#6b6e70" stroke-width="1"/><path d="M2.5 4h4" stroke="#6b6e70" stroke-width="1"/></svg>
<svg style="left:96px;top:329px;" width="9" height="11" viewBox="0 0 9 11"><path d="M0.5 0.5h8v6.5L4.5 10.5 0.5 7z" fill="#313335" stroke="#6b6e70" stroke-width="1"/><path d="M2.5 4h4" stroke="#6b6e70" stroke-width="1"/></svg>
<svg style="left:96px;top:348px;" width="9" height="11" viewBox="0 0 9 11"><path d="M0.5 10.5h8V4L4.5 0.5 0.5 4z" fill="#313335" stroke="#6b6e70" stroke-width="1"/><path d="M2.5 6.5h4" stroke="#6b6e70" stroke-width="1"/></svg>
<svg style="left:96px;top:368px;" width="9" height="11" viewBox="0 0 9 11"><path d="M0.5 10.5h8V4L4.5 0.5 0.5 4z" fill="#313335" stroke="#6b6e70" stroke-width="1"/><path d="M2.5 6.5h4" stroke="#6b6e70" stroke-width="1"/></svg>
<svg style="left:96px;top:389px;" width="9" height="11" viewBox="0 0 9 11"><path d="M0.5 0.5h8v6.5L4.5 10.5 0.5 7z" fill="#313335" stroke="#6b6e70" stroke-width="1"/><path d="M2.5 4h4" stroke="#6b6e70" stroke-width="1"/></svg>
<svg style="left:96px;top:429px;" width="9" height="11" viewBox="0 0 9 11"><path d="M0.5 0.5h8v6.5L4.5 10.5 0.5 7z" fill="#313335" stroke="#6b6e70" stroke-width="1"/><path d="M2.5 4h4" stroke="#6b6e70" stroke-width="1"/></svg>
<svg style="left:96px;top:468px;" width="9" height="11" viewBox="0 0 9 11"><path d="M0.5 10.5h8V4L4.5 0.5 0.5 4z" fill="#313335" stroke="#6b6e70" stroke-width="1"/><path d="M2.5 6.5h4" stroke="#6b6e70" stroke-width="1"/></svg>
<svg style="left:96px;top:488px;" width="9" height="11" viewBox="0 0 9 11"><path d="M0.5 10.5h8V4L4.5 0.5 0.5 4z" fill="#313335" stroke="#6b6e70" stroke-width="1"/><path d="M2.5 6.5h4" stroke="#6b6e70" stroke-width="1"/></svg>
<svg style="left:96px;top:509px;" width="9" height="11" viewBox="0 0 9 11"><path d="M0.5 0.5h8v6.5L4.5 10.5 0.5 7z" fill="#313335" stroke="#6b6e70" stroke-width="1"/><path d="M2.5 4h4" stroke="#6b6e70" stroke-width="1"/></svg>
<svg style="left:96px;top:549px;" width="9" height="11" viewBox="0 0 9 11"><path d="M0.5 0.5h8v6.5L4.5 10.5 0.5 7z" fill="#313335" stroke="#6b6e70" stroke-width="1"/><path d="M2.5 4h4" stroke="#6b6e70" stroke-width="1"/></svg>
<svg style="left:96px;top:588px;" width="9" height="11" viewBox="0 0 9 11"><path d="M0.5 10.5h8V4L4.5 0.5 0.5 4z" fill="#313335" stroke="#6b6e70" stroke-width="1"/><path d="M2.5 6.5h4" stroke="#6b6e70" stroke-width="1"/></svg>
<svg style="left:96px;top:608px;" width="9" height="11" viewBox="0 0 9 11"><path d="M0.5 10.5h8V4L4.5 0.5 0.5 4z" fill="#313335" stroke="#6b6e70" stroke-width="1"/><path d="M2.5 6.5h4" stroke="#6b6e70" stroke-width="1"/></svg>
<svg style="left:96px;top:629px;" width="9" height="11" viewBox="0 0 9 11"><path d="M0.5 0.5h8v6.5L4.5 10.5 0.5 7z" fill="#313335" stroke="#6b6e70" stroke-width="1"/><path d="M2.5 4h4" stroke="#6b6e70" stroke-width="1"/></svg>
<svg style="left:96px;top:669px;" width="9" height="11" viewBox="0 0 9 11"><path d="M0.5 0.5h8v6.5L4.5 10.5 0.5 7z" fill="#313335" stroke="#6b6e70" stroke-width="1"/><path d="M2.5 4h4" stroke="#6b6e70" stroke-width="1"/></svg>
<svg style="left:96px;top:688px;" width="9" height="11" viewBox="0 0 9 11"><path d="M0.5 10.5h8V4L4.5 0.5 0.5 4z" fill="#313335" stroke="#6b6e70" stroke-width="1"/><path d="M2.5 6.5h4" stroke="#6b6e70" stroke-width="1"/></svg>
<svg style="left:96px;top:708px;" width="9" height="11" viewBox="0 0 9 11"><path d="M0.5 10.5h8V4L4.5 0.5 0.5 4z" fill="#313335" stroke="#6b6e70" stroke-width="1"/><path d="M2.5 6.5h4" stroke="#6b6e70" stroke-width="1"/></svg>
<svg style="left:96px;top:728px;" width="9" height="11" viewBox="0 0 9 11"><path d="M0.5 10.5h8V4L4.5 0.5 0.5 4z" fill="#313335" stroke="#6b6e70" stroke-width="1"/><path d="M2.5 6.5h4" stroke="#6b6e70" stroke-width="1"/></svg>
<svg style="left:96px;top:749px;" width="9" height="11" viewBox="0 0 9 11"><path d="M0.5 0.5h8v6.5L4.5 10.5 0.5 7z" fill="#313335" stroke="#6b6e70" stroke-width="1"/><path d="M2.5 4h4" stroke="#6b6e70" stroke-width="1"/></svg>
<svg style="left:96px;top:769px;" width="9" height="11" viewBox="0 0 9 11"><path d="M0.5 0.5h8v6.5L4.5 10.5 0.5 7z" fill="#313335" stroke="#6b6e70" stroke-width="1"/><path d="M2.5 4h4" stroke="#6b6e70" stroke-width="1"/></svg>
<svg style="left:96px;top:788px;" width="9" height="11" viewBox="0 0 9 11"><path d="M0.5 10.5h8V4L4.5 0.5 0.5 4z" fill="#313335" stroke="#6b6e70" stroke-width="1"/><path d="M2.5 6.5h4" stroke="#6b6e70" stroke-width="1"/></svg>
<svg style="left:96px;top:828px;" width="9" height="11" viewBox="0 0 9 11"><path d="M0.5 10.5h8V4L4.5 0.5 0.5 4z" fill="#313335" stroke="#6b6e70" stroke-width="1"/><path d="M2.5 6.5h4" stroke="#6b6e70" stroke-width="1"/></svg>
<svg style="left:96px;top:848px;" width="9" height="11" viewBox="0 0 9 11"><path d="M0.5 10.5h8V4L4.5 0.5 0.5 4z" fill="#313335" stroke="#6b6e70" stroke-width="1"/><path d="M2.5 6.5h4" stroke="#6b6e70" stroke-width="1"/></svg>
<svg style="left:96px;top:868px;" width="9" height="11" viewBox="0 0 9 11"><path d="M0.5 10.5h8V4L4.5 0.5 0.5 4z" fill="#313335" stroke="#6b6e70" stroke-width="1"/><path d="M2.5 6.5h4" stroke="#6b6e70" stroke-width="1"/></svg>
<svg style="left:96px;top:888px;" width="9" height="11" viewBox="0 0 9 11"><path d="M0.5 10.5h8V4L4.5 0.5 0.5 4z" fill="#313335" stroke="#6b6e70" stroke-width="1"/><path d="M2.5 6.5h4" stroke="#6b6e70" stroke-width="1"/></svg>
<svg style="left:96px;top:908px;" width="9" height="11" viewBox="0 0 9 11"><path d="M0.5 10.5h8V4L4.5 0.5 0.5 4z" fill="#313335" stroke="#6b6e70" stroke-width="1"/><path d="M2.5 6.5h4" stroke="#6b6e70" stroke-width="1"/></svg>
<svg style="left:96px;top:928px;" width="9" height="11" viewBox="0 0 9 11"><path d="M0.5 10.5h8V4L4.5 0.5 0.5 4z" fill="#313335" stroke="#6b6e70" stroke-width="1"/><path d="M2.5 6.5h4" stroke="#6b6e70" stroke-width="1"/></svg>
<div class="a m" style="left:35px;top:129px;font-size:12px;letter-spacing:-0.2px;line-height:1;color:#606366">79</div>
<div class="a m" style="left:35px;top:149px;font-size:12px;letter-spacing:-0.2px;line-height:1;color:#606366">80</div>
<div class="a m" style="left:35px;top:169px;font-size:12px;letter-spacing:-0.2px;line-height:1;color:#606366">81</div>
<div class="a m" style="left:35px;top:189px;font-size:12px;letter-spacing:-0.2px;line-height:1;color:#606366">82</div>
<div class="a m" style="left:35px;top:209px;font-size:12px;letter-spacing:-0.2px;line-height:1;color:#606366">83</div>
<div class="a m" style="left:35px;top:229px;font-size:12px;letter-spacing:-0.2px;line-height:1;color:#606366">84</div>
<div class="a m" style="left:35px;top:249px;font-size:12px;letter-spacing:-0.2px;line-height:1;color:#606366">85</div>
<div class="a m" style="left:35px;top:269px;font-size:12px;letter-spacing:-0.2px;line-height:1;color:#606366">86</div>
<div class="a m" style="left:35px;top:289px;font-size:12px;letter-spacing:-0.2px;line-height:1;color:#606366">87</div>
<div class="a m" style="left:35px;top:309px;font-size:12px;letter-spacing:-0.2px;line-height:1;color:#606366">88</div>
<div class="a m" style="left:35px;top:329px;font-size:12px;letter-spacing:-0.2px;line-height:1;color:#606366">89</div>
<div class="a m" style="left:35px;top:349px;font-size:12px;letter-spacing:-0.2px;line-height:1;color:#606366">90</div>
<div class="a m" style="left:35px;top:369px;font-size:12px;letter-spacing:-0.2px;line-height:1;color:#606366">91</div>
<div class="a m" style="left:35px;top:389px;font-size:12px;letter-spacing:-0.2px;line-height:1;color:#606366">92</div>
<div class="a m" style="left:35px;top:409px;font-size:12px;letter-spacing:-0.2px;line-height:1;color:#606366">93</div>
<div class="a m" style="left:35px;top:429px;font-size:12px;letter-spacing:-0.2px;line-height:1;color:#606366">94</div>
<div class="a m" style="left:35px;top:449px;font-size:12px;letter-spacing:-0.2px;line-height:1;color:#606366">95</div>
<div class="a m" style="left:35px;top:469px;font-size:12px;letter-spacing:-0.2px;line-height:1;color:#a4a3a3">96</div>
<div class="a m" style="left:35px;top:489px;font-size:12px;letter-spacing:-0.2px;line-height:1;color:#606366">97</div>
<div class="a m" style="left:35px;top:509px;font-size:12px;letter-spacing:-0.2px;line-height:1;color:#606366">98</div>
<div class="a m" style="left:35px;top:529px;font-size:12px;letter-spacing:-0.2px;line-height:1;color:#606366">99</div>
<div class="a m" style="left:28px;top:549px;font-size:12px;letter-spacing:-0.2px;line-height:1;color:#606366">100</div>
<div class="a m" style="left:28px;top:569px;font-size:12px;letter-spacing:-0.2px;line-height:1;color:#606366">101</div>
<div class="a m" style="left:28px;top:589px;font-size:12px;letter-spacing:-0.2px;line-height:1;color:#606366">102</div>
<div class="a m" style="left:28px;top:609px;font-size:12px;letter-spacing:-0.2px;line-height:1;color:#606366">103</div>
<div class="a m" style="left:28px;top:629px;font-size:12px;letter-spacing:-0.2px;line-height:1;color:#606366">104</div>
<div class="a m" style="left:28px;top:649px;font-size:12px;letter-spacing:-0.2px;line-height:1;color:#606366">105</div>
<div class="a m" style="left:28px;top:669px;font-size:12px;letter-spacing:-0.2px;line-height:1;color:#606366">106</div>
<div class="a m" style="left:28px;top:689px;font-size:12px;letter-spacing:-0.2px;line-height:1;color:#606366">107</div>
<div class="a m" style="left:28px;top:709px;font-size:12px;letter-spacing:-0.2px;line-height:1;color:#606366">108</div>
<div class="a m" style="left:28px;top:729px;font-size:12px;letter-spacing:-0.2px;line-height:1;color:#606366">109</div>
<div class="a m" style="left:28px;top:749px;font-size:12px;letter-spacing:-0.2px;line-height:1;color:#606366">110</div>
<div class="a m" style="left:28px;top:769px;font-size:12px;letter-spacing:-0.2px;line-height:1;color:#606366">111</div>
<div class="a m" style="left:28px;top:789px;font-size:12px;letter-spacing:-0.2px;line-height:1;color:#606366">112</div>
<div class="a m" style="left:28px;top:809px;font-size:12px;letter-spacing:-0.2px;line-height:1;color:#606366">113</div>
<div class="a m" style="left:28px;top:829px;font-size:12px;letter-spacing:-0.2px;line-height:1;color:#606366">114</div>
<div class="a m" style="left:28px;top:849px;font-size:12px;letter-spacing:-0.2px;line-height:1;color:#606366">115</div>
<div class="a m" style="left:28px;top:869px;font-size:12px;letter-spacing:-0.2px;line-height:1;color:#606366">116</div>
<div class="a m" style="left:28px;top:889px;font-size:12px;letter-spacing:-0.2px;line-height:1;color:#606366">117</div>
<div class="a m" style="left:28px;top:909px;font-size:12px;letter-spacing:-0.2px;line-height:1;color:#606366">118</div>
<div class="a m" style="left:28px;top:929px;font-size:12px;letter-spacing:-0.2px;line-height:1;color:#606366">119</div>
<div class="a m" style="left:28px;top:949px;font-size:12px;letter-spacing:-0.2px;line-height:1;color:#606366">120</div>
<div class="a m" style="left:302px;top:129px;font-size:12px;letter-spacing:-0.2px;line-height:1"><span style="color:#e8bf6a">&lt;form</span><span style="color:#bababa"> </span><span style="color:#bababa">id=</span><span style="color:#a5c261">"borrowBookingsForm"</span><span style="color:#bababa"> </span><span style="color:#bababa">action=</span><span style="color:#a5c261">""</span><span style="color:#bababa"> </span><span style="color:#bababa">method=</span><span style="color:#a5c261">"post"</span><span style="color:#e8bf6a">&gt;</span></div>
<div class="a m" style="left:330px;top:149px;font-size:12px;letter-spacing:-0.2px;line-height:1"><span style="color:#e8bf6a">&lt;div</span><span style="color:#bababa"> </span><span style="color:#bababa">class=</span><span style="color:#a5c261">"modal-body"</span><span style="color:#e8bf6a">&gt;</span></div>
<div class="a m" style="left:358px;top:169px;font-size:12px;letter-spacing:-0.2px;line-height:1"><span style="color:#e8bf6a">&lt;div</span><span style="color:#bababa"> </span><span style="color:#bababa">class=</span><span style="color:#a5c261">"form-group"</span><span style="color:#e8bf6a">&gt;</span></div>
<div class="a m" style="left:386px;top:189px;font-size:12px;letter-spacing:-0.2px;line-height:1"><span style="color:#e8bf6a">&lt;label</span><span style="color:#bababa"> </span><span style="color:#bababa">for=</span><span style="color:#a5c261">"reason"</span><span style="color:#e8bf6a">&gt;</span><span style="color:#a9b7c6">Your name</span><span style="color:#e8bf6a">&lt;/label</span><span style="color:#e8bf6a">&gt;</span></div>
<div class="a m" style="left:386px;top:209px;font-size:12px;letter-spacing:-0.2px;line-height:1"><span style="color:#e8bf6a">&lt;input</span><span style="color:#bababa"> </span><span style="color:#bababa">disabled</span><span style="color:#bababa"> </span><span style="color:#bababa">type=</span><span style="color:#a5c261">"text"</span><span style="color:#bababa"> </span><span style="color:#bababa">class=</span><span style="color:#a5c261">"form-control"</span><span style="color:#bababa"> </span><span style="color:#bababa">id=</span><span style="color:#a5c261">"reason"</span><span style="color:#bababa"> </span><span style="color:#bababa">name=</span><span style="color:#a5c261">"reason"</span></div>
<div class="a m" style="left:435px;top:229px;font-size:12px;letter-spacing:-0.2px;line-height:1"><span style="color:#a9b7c6">placeholder="Enter a reason..."</span></div>
<div class="a m" style="left:435px;top:249px;font-size:12px;letter-spacing:-0.2px;line-height:1"><span style="color:#bababa">value=</span><span style="color:#a5c261">"</span><span style="color:#cc7832">&lt;?php</span><span style="color:#a9b7c6"> </span><span style="color:#cc7832">echo</span><span style="color:#a9b7c6"> </span><span style="color:#a9b7c6">escape</span><span style="color:#a9b7c6">(</span><span style="color:#9876aa">$user</span><span style="color:#a9b7c6">-&gt;</span><span style="color:#ffc66d">data</span><span style="color:#a9b7c6">()-&gt;</span><span style="color:#9876aa">name</span><span style="color:#a9b7c6">) </span><span style="color:#cc7832">?&gt;</span><span style="color:#a5c261">"</span><span style="color:#e8bf6a">/&gt;</span></div>
<div class="a m" style="left:358px;top:269px;font-size:12px;letter-spacing:-0.2px;line-height:1"><span style="color:#e8bf6a">&lt;/div</span><span style="color:#e8bf6a">&gt;</span></div>
<div class="a m" style="left:358px;top:289px;font-size:12px;letter-spacing:-0.2px;line-height:1"><span style="color:#e8bf6a">&lt;div</span><span style="color:#bababa"> </span><span style="color:#bababa">class=</span><span style="color:#a5c261">"form-group"</span><span style="color:#e8bf6a">&gt;</span></div>
<div class="a m" style="left:386px;top:309px;font-size:12px;letter-spacing:-0.2px;line-height:1"><span style="color:#e8bf6a">&lt;label</span><span style="color:#bababa"> </span><span style="color:#bababa">for=</span><span style="color:#a5c261">"date"</span><span style="color:#e8bf6a">&gt;</span><span style="color:#a9b7c6">Date</span><span style="color:#e8bf6a">&lt;/label</span><span style="color:#e8bf6a">&gt;</span></div>
<div class="a m" style="left:386px;top:329px;font-size:12px;letter-spacing:-0.2px;line-height:1"><span style="color:#e8bf6a">&lt;input</span><span style="color:#bababa"> </span><span style="color:#bababa">type=</span><span style="color:#a5c261">"text"</span><span style="color:#bababa"> </span><span style="color:#bababa">class=</span><span style="color:#a5c261">"form-control js-date-picker"</span><span style="color:#bababa"> </span><span style="color:#bababa">id=</span><span style="color:#a5c261">"date"</span><span style="color:#bababa"> </span><span style="color:#bababa">name=</span><span style="color:#a5c261">"date"</span></div>
<div class="a m" style="left:435px;top:349px;font-size:12px;letter-spacing:-0.2px;line-height:1"><span style="color:#a9b7c6">placeholder="Select a date..." disabled/&gt;</span></div>
<div class="a m" style="left:358px;top:369px;font-size:12px;letter-spacing:-0.2px;line-height:1"><span style="color:#e8bf6a">&lt;/div</span><span style="color:#e8bf6a">&gt;</span></div>
<div class="a m" style="left:358px;top:389px;font-size:12px;letter-spacing:-0.2px;line-height:1"><span style="color:#e8bf6a">&lt;div</span><span style="color:#bababa"> </span><span style="color:#bababa">class=</span><span style="color:#a5c261">"form-group"</span><span style="color:#e8bf6a">&gt;</span></div>
<div class="a m" style="left:386px;top:409px;font-size:12px;letter-spacing:-0.2px;line-height:1"><span style="color:#e8bf6a">&lt;label</span><span style="color:#bababa"> </span><span style="color:#bababa">for=</span><span style="color:#a5c261">"start_time"</span><span style="color:#e8bf6a">&gt;</span><span style="color:#a9b7c6">Start time</span><span style="color:#e8bf6a">&lt;/label</span><span style="color:#e8bf6a">&gt;</span></div>
<div class="a m" style="left:386px;top:429px;font-size:12px;letter-spacing:-0.2px;line-height:1"><span style="color:#e8bf6a">&lt;input</span><span style="color:#bababa"> </span><span style="color:#bababa">type=</span><span style="color:#a5c261">"text"</span><span style="color:#bababa"> </span><span style="color:#bababa">class=</span><span style="color:#a5c261">"form-control js-time-picker"</span><span style="color:#bababa"> </span><span style="color:#bababa">id=</span><span style="color:#a5c261">"start_time"</span></div>
<div class="a m" style="left:435px;top:449px;font-size:12px;letter-spacing:-0.2px;line-height:1"><span style="color:#a9b7c6">name="start_time"</span></div>
<div class="a m" style="left:435px;top:469px;font-size:12px;letter-spacing:-0.2px;line-height:1"><span style="color:#bababa">placeholder=</span><span style="color:#a5c261">"Select a start time..."</span><span style="color:#bababa"> onclick=</span><span style="color:#a5c261">"</span><span style="color:#ffc66d">startTimePicker</span><span style="color:#a9b7c6">()</span><span style="color:#cc7832">;</span><span style="color:#a5c261">"</span><span style="color:#e8bf6a">/&gt;</span></div>
<div class="a m" style="left:358px;top:489px;font-size:12px;letter-spacing:-0.2px;line-height:1"><span style="color:#e8bf6a">&lt;/div</span><span style="color:#e8bf6a">&gt;</span></div>
<div class="a m" style="left:358px;top:509px;font-size:12px;letter-spacing:-0.2px;line-height:1"><span style="color:#e8bf6a">&lt;div</span><span style="color:#bababa"> </span><span style="color:#bababa">class=</span><span style="color:#a5c261">"form-group"</span><span style="color:#e8bf6a">&gt;</span></div>
<div class="a m" style="left:386px;top:529px;font-size:12px;letter-spacing:-0.2px;line-height:1"><span style="color:#e8bf6a">&lt;label</span><span style="color:#bababa"> </span><span style="color:#bababa">for=</span><span style="color:#a5c261">"end_time"</span><span style="color:#e8bf6a">&gt;</span><span style="color:#a9b7c6">End time</span><span style="color:#e8bf6a">&lt;/label</span><span style="color:#e8bf6a">&gt;</span></div>
<div class="a m" style="left:386px;top:549px;font-size:12px;letter-spacing:-0.2px;line-height:1"><span style="color:#e8bf6a">&lt;input</span><span style="color:#bababa"> </span><span style="color:#bababa">type=</span><span style="color:#a5c261">"text"</span><span style="color:#bababa"> </span><span style="color:#bababa">class=</span><span style="color:#a5c261">"form-control js-time-picker-2"</span><span style="color:#bababa"> </span><span style="color:#bababa">id=</span><span style="color:#a5c261">"end_time"</span></div>
<div class="a m" style="left:435px;top:569px;font-size:12px;letter-spacing:-0.2px;line-height:1"><span style="color:#a9b7c6">name="end_time"</span></div>
<div class="a m" style="left:435px;top:589px;font-size:12px;letter-spacing:-0.2px;line-height:1"><span style="color:#bababa">placeholder=</span><span style="color:#a5c261">"Select a end time..."</span><span style="color:#bababa"> onclick=</span><span style="color:#a5c261">"</span><span style="color:#ffc66d">endTimePicker</span><span style="color:#a9b7c6">()</span><span style="color:#cc7832">;</span><span style="color:#a5c261">"</span><span style="color:#e8bf6a">/&gt;</span></div>
<div class="a m" style="left:358px;top:609px;font-size:12px;letter-spacing:-0.2px;line-height:1"><span style="color:#e8bf6a">&lt;/div</span><span style="color:#e8bf6a">&gt;</span></div>
<div class="a m" style="left:358px;top:629px;font-size:12px;letter-spacing:-0.2px;line-height:1"><span style="color:#e8bf6a">&lt;div</span><span style="color:#bababa"> </span><span style="color:#bababa">class=</span><span style="color:#a5c261">"form-group"</span><span style="color:#e8bf6a">&gt;</span></div>
<div class="a m" style="left:386px;top:649px;font-size:12px;letter-spacing:-0.2px;line-height:1"><span style="color:#e8bf6a">&lt;label</span><span style="color:#bababa"> </span><span style="color:#bababa">for=</span><span style="color:#a5c261">"description"</span><span style="color:#e8bf6a">&gt;</span><span style="color:#a9b7c6">Description</span><span style="color:#e8bf6a">&lt;/label</span><span style="color:#e8bf6a">&gt;</span></div>
<div class="a m" style="left:386px;top:669px;font-size:12px;letter-spacing:-0.2px;line-height:1"><span style="color:#e8bf6a">&lt;textarea</span><span style="color:#bababa"> </span><span style="color:#bababa">class=</span><span style="color:#a5c261">"form-control"</span><span style="color:#bababa"> </span><span style="color:#bababa">id=</span><span style="color:#a5c261">"description"</span><span style="color:#bababa"> </span><span style="color:#bababa">name=</span><span style="color:#a5c261">"description"</span></div>
<div class="a m" style="left:456px;top:689px;font-size:12px;letter-spacing:-0.2px;line-height:1"><span style="color:#a9b7c6">placeholder="Enter a description..."&gt;</span><span style="color:#e8bf6a">&lt;/textarea</span><span style="color:#e8bf6a">&gt;</span></div>
<div class="a m" style="left:358px;top:709px;font-size:12px;letter-spacing:-0.2px;line-height:1"><span style="color:#e8bf6a">&lt;/div</span><span style="color:#e8bf6a">&gt;</span></div>
<div class="a m" style="left:330px;top:729px;font-size:12px;letter-spacing:-0.2px;line-height:1"><span style="color:#e8bf6a">&lt;/div</span><span style="color:#e8bf6a">&gt;</span></div>
<div class="a m" style="left:330px;top:749px;font-size:12px;letter-spacing:-0.2px;line-height:1"><span style="color:#e8bf6a">&lt;div</span><span style="color:#bababa"> </span><span style="color:#bababa">class=</span><span style="color:#a5c261">"modal-footer"</span><span style="color:#e8bf6a">&gt;</span></div>
<div class="a m" style="left:358px;top:769px;font-size:12px;letter-spacing:-0.2px;line-height:1"><span style="color:#e8bf6a">&lt;button</span><span style="color:#bababa"> type=</span><span style="color:#a5c261">"button"</span><span style="color:#bababa"> class=</span><span style="color:#a5c261">"btn btn-success"</span><span style="color:#bababa"> onclick=</span><span style="color:#a5c261">"</span><span style="color:#ffc66d">getBorrowData</span><span style="color:#a9b7c6">()</span><span style="color:#cc7832">;</span><span style="color:#a5c261">"</span><span style="color:#e8bf6a">&gt;</span><span style="color:#a9b7c6">Submit</span></div>
<div class="a m" style="left:358px;top:789px;font-size:12px;letter-spacing:-0.2px;line-height:1"><span style="color:#e8bf6a">&lt;/button</span><span style="color:#e8bf6a">&gt;</span></div>
<div class="a m" style="left:358px;top:809px;font-size:12px;letter-spacing:-0.2px;line-height:1"><span style="color:#e8bf6a">&lt;button</span><span style="color:#bababa"> </span><span style="color:#bababa">type=</span><span style="color:#a5c261">"button"</span><span style="color:#bababa"> </span><span style="color:#bababa">class=</span><span style="color:#a5c261">"btn btn-danger"</span><span style="color:#bababa"> </span><span style="color:#bababa">data-dismiss=</span><span style="color:#a5c261">"modal"</span><span style="color:#e8bf6a">&gt;</span><span style="color:#a9b7c6">Cancel</span><span style="color:#e8bf6a">&lt;/button</span><span style="color:#e8bf6a">&gt;</span></div>
<div class="a m" style="left:330px;top:829px;font-size:12px;letter-spacing:-0.2px;line-height:1"><span style="color:#e8bf6a">&lt;/div</span><span style="color:#e8bf6a">&gt;</span></div>
<div class="a m" style="left:302px;top:849px;font-size:12px;letter-spacing:-0.2px;line-height:1"><span style="color:#e8bf6a">&lt;/form</span><span style="color:#e8bf6a">&gt;</span></div>
<div class="a m" style="left:274px;top:869px;font-size:12px;letter-spacing:-0.2px;line-height:1"><span style="color:#e8bf6a">&lt;/div</span><span style="color:#e8bf6a">&gt;</span></div>
<div class="a m" style="left:246px;top:889px;font-size:12px;letter-spacing:-0.2px;line-height:1"><span style="color:#e8bf6a">&lt;/div</span><span style="color:#e8bf6a">&gt;</span></div>
<div class="a m" style="left:218px;top:909px;font-size:12px;letter-spacing:-0.2px;line-height:1"><span style="color:#e8bf6a">&lt;/div</span><span style="color:#e8bf6a">&gt;</span></div>
<div class="a m" style="left:190px;top:929px;font-size:12px;letter-spacing:-0.2px;line-height:1"><span style="color:#e8bf6a">&lt;/div</span><span style="color:#e8bf6a">&gt;</span></div>
<div class="a m" style="left:190px;top:949px;font-size:12px;letter-spacing:-0.2px;line-height:1"><span style="color:#e8bf6a">&lt;div</span><span style="color:#bababa"> </span><span style="color:#bababa">id=</span><span style="color:#a5c261">"calendar"</span><span style="color:#e8bf6a">&gt;</span><span style="color:#e8bf6a">&lt;/div</span></div>
<div style="position:absolute;left:693px;top:465px;width:1px;height:18px;background:#bbbbbb"></div>
<svg style="left:690px;top:466px;" width="8" height="22" viewBox="0 0 8 22"><path d="M1 1h2.5M4.5 1H7M4 1v20M1 21h2.5M4.5 21H7" stroke="#111" stroke-width="2.2"/><path d="M1 1h2.5M4.5 1H7M4 1v20M1 21h2.5M4.5 21H7" stroke="#eee" stroke-width="1"/></svg>
<div style="position:absolute;left:1024px;top:124px;width:16px;height:841px;background:#2b2b2b"></div>
<svg style="left:1027px;top:125px;" width="12" height="12" viewBox="0 0 12 12"><circle cx="6" cy="6" r="6" fill="#b52424"/><rect x="5.2" y="2.5" width="1.6" height="4.5" fill="#fff"/><rect x="5.2" y="8" width="1.6" height="1.6" fill="#fff"/></svg>
<div style="position:absolute;left:1031px;top:271px;width:8px;height:68px;background:#4d4f50"></div>
<div style="position:absolute;left:1026px;top:140px;width:14px;height:2px;background:#c9a21e"></div>
<div style="position:absolute;left:1026px;top:146px;width:14px;height:3px;background:#c9a21e"></div>
<div style="position:absolute;left:1026px;top:150px;width:14px;height:3px;background:#c9a21e"></div>
<div style="position:absolute;left:1026px;top:156px;width:14px;height:4px;background:#c9a21e"></div>
<div style="position:absolute;left:1026px;top:279px;width:14px;height:2px;background:#c9a21e"></div>
<div style="position:absolute;left:1026px;top:346px;width:14px;height:2px;background:#c9a21e"></div>
<div style="position:absolute;left:1026px;top:355px;width:14px;height:3px;background:#7c7660"></div>
<div style="position:absolute;left:1026px;top:368px;width:14px;height:2px;background:#c9a21e"></div>
<div style="position:absolute;left:1026px;top:388px;width:14px;height:2px;background:#c9a21e"></div>
<div style="position:absolute;left:1026px;top:409px;width:14px;height:2px;background:#c9a21e"></div>
<div style="position:absolute;left:1026px;top:433px;width:14px;height:2px;background:#7c7660"></div>
<div style="position:absolute;left:1026px;top:446px;width:14px;height:10px;background:#c9a21e"></div>
<div style="position:absolute;left:1026px;top:457px;width:14px;height:4px;background:#7c7660"></div>
<div style="position:absolute;left:1026px;top:462px;width:14px;height:8px;background:#7c7660"></div>
<div style="position:absolute;left:1026px;top:467px;width:14px;height:5px;background:#c9a21e"></div>
<div style="position:absolute;left:1026px;top:474px;width:14px;height:12px;background:#7c7660"></div>
<div style="position:absolute;left:1026px;top:507px;width:14px;height:2px;background:#7c7660"></div>
<div style="position:absolute;left:1026px;top:514px;width:14px;height:2px;background:#7c7660"></div>
<div style="position:absolute;left:1026px;top:532px;width:14px;height:10px;background:#7c7660"></div>
<div style="position:absolute;left:1026px;top:545px;width:14px;height:10px;background:#7c7660"></div>
<div style="position:absolute;left:1026px;top:585px;width:14px;height:2px;background:#7c7660"></div>
<div style="position:absolute;left:1026px;top:588px;width:14px;height:2px;background:#7c7660"></div>
<div style="position:absolute;left:1026px;top:608px;width:14px;height:10px;background:#c9a21e"></div>
<div style="position:absolute;left:1026px;top:622px;width:14px;height:2px;background:#7c7660"></div>
<div style="position:absolute;left:1026px;top:628px;width:14px;height:2px;background:#7c7660"></div>
<div style="position:absolute;left:1026px;top:638px;width:14px;height:2px;background:#7c7660"></div>
<div style="position:absolute;left:1026px;top:650px;width:14px;height:4px;background:#c9a21e"></div>
<div style="position:absolute;left:1026px;top:658px;width:14px;height:2px;background:#7c7660"></div>
<div style="position:absolute;left:1026px;top:668px;width:14px;height:2px;background:#7c7660"></div>
<div style="position:absolute;left:1026px;top:674px;width:14px;height:6px;background:#c9a21e"></div>
<div style="position:absolute;left:1026px;top:687px;width:14px;height:2px;background:#7c7660"></div>
<div style="position:absolute;left:1026px;top:720px;width:14px;height:4px;background:#c9a21e"></div>
<div style="position:absolute;left:1026px;top:725px;width:14px;height:1px;background:#c75450"></div>
<div style="position:absolute;left:1026px;top:738px;width:14px;height:2px;background:#7c7660"></div>
<div style="position:absolute;left:1026px;top:764px;width:14px;height:9px;background:#7c7660"></div>
<div style="position:absolute;left:1026px;top:783px;width:14px;height:2px;background:#7c7660"></div>
<div style="position:absolute;left:1026px;top:796px;width:14px;height:2px;background:#7c7660"></div>
<div style="position:absolute;left:1026px;top:817px;width:14px;height:2px;background:#7c7660"></div>
<div style="position:absolute;left:1026px;top:825px;width:14px;height:2px;background:#7c7660"></div>
<div style="position:absolute;left:1026px;top:848px;width:14px;height:2px;background:#7c7660"></div>
<div style="position:absolute;left:1026px;top:852px;width:14px;height:2px;background:#7c7660"></div>
<div style="position:absolute;left:1026px;top:858px;width:14px;height:2px;background:#7c7660"></div>
<div style="position:absolute;left:1026px;top:881px;width:14px;height:2px;background:#7c7660"></div>
<div style="position:absolute;left:1026px;top:897px;width:14px;height:3px;background:#c9a21e"></div>
<div style="position:absolute;left:1026px;top:930px;width:14px;height:2px;background:#7c7660"></div>
<div style="position:absolute;left:1026px;top:940px;width:14px;height:2px;background:#7c7660"></div>
<div style="position:absolute;left:1026px;top:954px;width:14px;height:3px;background:#c9a21e"></div>
<div style="position:absolute;left:107px;top:957px;width:886px;height:8px;background:#4d4d4d"></div>
<div style="position:absolute;left:23px;top:965px;width:1017px;height:25px;background:#2f3133;border-top:1px solid #323232"></div>
<div class="a" style="left:110.70px;top:972.92px;font-size:12.5px;line-height:1;color:#46b4c4;letter-spacing:-0.398px;">main</div>
<svg style="left:147.0px;top:974px;" width="5" height="9" viewBox="0 0 5 9"><path d="M0.5 0.5l4 4-4 4" fill="none" stroke="#707274" stroke-width="1"/></svg>
<div class="a" style="left:161.80px;top:972.92px;font-size:12.5px;line-height:1;color:#5ebb4e;letter-spacing:-0.113px;">div.bookings</div>
<svg style="left:239.20000000000005px;top:974px;" width="5" height="9" viewBox="0 0 5 9"><path d="M0.5 0.5l4 4-4 4" fill="none" stroke="#707274" stroke-width="1"/></svg>
<div class="a" style="left:253.40px;top:972.92px;font-size:12.5px;line-height:1;color:#a7b33c;letter-spacing:-0.103px;">div.container</div>
<svg style="left:332.5px;top:974px;" width="5" height="9" viewBox="0 0 5 9"><path d="M0.5 0.5l4 4-4 4" fill="none" stroke="#707274" stroke-width="1"/></svg>
<div class="a" style="left:347.00px;top:972.92px;font-size:12.5px;line-height:1;color:#c8595a;letter-spacing:-0.135px;">div#borrowModal.modal.fade</div>
<svg style="left:514.5px;top:974px;" width="5" height="9" viewBox="0 0 5 9"><path d="M0.5 0.5l4 4-4 4" fill="none" stroke="#707274" stroke-width="1"/></svg>
<div class="a" style="left:529.00px;top:972.92px;font-size:12.5px;line-height:1;color:#c058b5;letter-spacing:-0.062px;">div.modal-dialog.modal-dialog-centered</div>
<svg style="left:754.8px;top:974px;" width="5" height="9" viewBox="0 0 5 9"><path d="M0.5 0.5l4 4-4 4" fill="none" stroke="#707274" stroke-width="1"/></svg>
<div class="a" style="left:769.00px;top:972.92px;font-size:12.5px;line-height:1;color:#8d98c9;letter-spacing:0.051px;">div.modal-content</div>
<svg style="left:877.8000000000002px;top:974px;" width="5" height="9" viewBox="0 0 5 9"><path d="M0.5 0.5l4 4-4 4" fill="none" stroke="#707274" stroke-width="1"/></svg>
<div class="a" style="left:892.00px;top:972.92px;font-size:12.5px;line-height:1;color:#3fb6a8;letter-spacing:-0.141px;">form#borrowBookingsForm</div>
<div style="position:absolute;left:1px;top:990px;width:1276px;height:21px;background:#3c3f41;border-top:1px solid #323232"></div>
<svg style="left:35px;top:998px;" width="10" height="9" viewBox="0 0 10 9"><rect x="0" y="0" width="2" height="2" fill="#bbb"/><rect x="3" y="0" width="7" height="2" fill="#bbb"/><rect x="0" y="3.5" width="2" height="2" fill="#bbb"/><rect x="3" y="3.5" width="7" height="2" fill="#bbb"/><rect x="0" y="7" width="2" height="2" fill="#bbb"/><rect x="3" y="7" width="7" height="2" fill="#bbb"/></svg>
<div class="a" style="left:50.00px;top:996.14px;font-size:12px;line-height:1;color:#bbbbbb;letter-spacing:-0.654px;">6: TODO</div>
<div style="position:absolute;left:55px;top:1008px;width:5px;height:1px;background:#bbbbbb"></div>
<svg style="left:115px;top:996px;" width="11" height="10" viewBox="0 0 11 10"><rect x="0" y="0" width="11" height="10" fill="#bbb"/><path d="M2 2.5l3 2.5-3 2.5" fill="none" stroke="#3c3f41" stroke-width="1.2"/></svg>
<div class="a" style="left:130.80px;top:996.14px;font-size:12px;line-height:1;color:#bbbbbb;letter-spacing:-0.269px;">Terminal</div>
<svg style="left:197px;top:995px;" width="10" height="12" viewBox="0 0 10 12"><path d="M3 12V1M0.5 3.5L3 1l2.5 2.5M7 0v11M4.5 8.5L7 11l2.5-2.5" fill="none" stroke="#bbb" stroke-width="1.3"/></svg>
<div class="a" style="left:213.00px;top:996.14px;font-size:12px;line-height:1;color:#bbbbbb;letter-spacing:-0.361px;">File Transfer</div>
<svg style="left:1176px;top:997px;" width="13" height="12" viewBox="0 0 13 12"><path d="M6.5 1a5.5 5 0 1 1-3.5 8.8L1 11.5l.8-3A5.5 5 0 0 1 6.5 1z" fill="none" stroke="#bbb" stroke-width="1.3"/></svg>
<div class="a" style="left:1194.00px;top:996.34px;font-size:12px;line-height:1;color:#bbbbbb;letter-spacing:-0.560px;">Event Log</div>
<div style="position:absolute;left:1px;top:1011px;width:1276px;height:22px;background:#3c3f41;border-top:1px solid #4a4a49"></div>
<svg style="left:7px;top:1017px;" width="11" height="11" viewBox="0 0 11 11"><rect x="2.5" y="0.5" width="8" height="8" fill="none" stroke="#bbb" stroke-width="1.1"/><path d="M0.5 3v7.5H8" fill="none" stroke="#bbb" stroke-width="1.1"/></svg>
<svg style="left:983px;top:1016px;" width="12" height="13" viewBox="0 0 12 13"><circle cx="5" cy="5" r="3" fill="none" stroke="#bbb" stroke-width="2"/><path d="M8 8c0-2 3-2 3 0s-2 1.5-2 3M9 12.5v.5" fill="none" stroke="#bbb" stroke-width="1.1"/></svg>
<div class="a" style="left:1007.00px;top:1016.14px;font-size:12px;line-height:1;color:#bbbbbb;letter-spacing:-0.403px;">27 chars</div>
<div class="a" style="left:1065.00px;top:1016.14px;font-size:12px;line-height:1;color:#bbbbbb;letter-spacing:-0.646px;">96:85</div>
<div class="a" style="left:1104.60px;top:1016.14px;font-size:12px;line-height:1;color:#bbbbbb;letter-spacing:-1.302px;">LF</div>
<div class="a" style="left:1128.40px;top:1016.14px;font-size:12px;line-height:1;color:#bbbbbb;letter-spacing:-0.480px;">UTF-8</div>
<div class="a" style="left:1171.70px;top:1016.14px;font-size:12px;line-height:1;color:#bbbbbb;letter-spacing:-0.466px;">4 spaces</div>
<svg style="left:1226px;top:1018px;" width="11" height="11" viewBox="0 0 11 11"><path d="M1.5 5V3a2 2 0 0 1 4 0" fill="none" stroke="#bbb" stroke-width="1.2"/><rect x="3" y="5" width="8" height="6" fill="#bbb"/></svg>
<svg style="left:1252px;top:1017px;" width="12" height="12" viewBox="0 0 12 12"><path d="M2.5 4h7V1.5h-7z M0 4h12" stroke="#bbb" stroke-width="1.2" fill="#bbb"/><circle cx="6" cy="7.5" r="3" fill="#bbb"/><path d="M1 12c1-2.5 3-3 5-3s4 .5 5 3z" fill="#bbb"/></svg>
<div style="position:absolute;left:1040px;top:58px;width:214px;height:932px;background:#3c3f41;border-left:1px solid #323232"></div>
<div class="a" style="left:1047.20px;top:66.42px;font-size:12.5px;line-height:1;color:#bbbbbb;letter-spacing:-0.422px;">Remote Host</div>
<svg style="left:1208px;top:64px;" width="13" height="13" viewBox="0 0 13 13"><circle cx="6.5" cy="6.5" r="5.2" fill="none" stroke="#bbb" stroke-width="2.4" stroke-dasharray="2 2.08"/><circle cx="6.5" cy="6.5" r="3.6" fill="#bbb"/><circle cx="6.5" cy="6.5" r="1.6" fill="#3c3f41"/></svg>
<div style="position:absolute;left:1234px;top:71px;width:12px;height:2px;background:#bbb"></div>
<div style="position:absolute;left:1040px;top:84px;width:214px;height:1px;background:#323232"></div>
<svg style="left:1051px;top:98px;" width="16" height="16" viewBox="0 0 16 16"><path d="M2 6L6 1.5V6z" fill="#9aa7b0"/><path d="M7 1h5v7.5H2V6.8h5z" fill="#9aa7b0"/><rect x="0" y="9" width="15.5" height="7" fill="#4f9a3a"/><text x="7.7" y="15.4" text-anchor="middle" font-size="7" font-weight="bold" fill="#1f2f1a" font-family="Liberation Sans">FTP</text></svg>
<div class="a" style="left:1070.00px;top:98.60px;font-size:13px;line-height:1;color:#c8c8c8;letter-spacing:-0.558px;-webkit-text-stroke:0.3px #c8c8c8;">GeertFTP</div>
<svg style="left:1185px;top:102px;" width="9" height="6" viewBox="0 0 9 6"><path d="M0 0h9L4.5 6z" fill="#aaa"/></svg>
<div style="position:absolute;left:1207px;top:95px;width:23px;height:22px;background:#45484a;border:1px solid #5e6060;border-radius:3px"></div>
<div class="a" style="left:1213.00px;top:100.69px;font-size:11px;line-height:1;color:#bbbbbb;letter-spacing:0.277px;">...</div>
<svg style="left:1242px;top:102px;" width="6" height="7" viewBox="0 0 6 7"><path d="M0.5 0.5l2.5 3-2.5 3M3 0.5l2.5 3-2.5 3" fill="none" stroke="#999" stroke-width="0.9"/></svg>
<div style="position:absolute;left:1040px;top:124px;width:214px;height:1px;background:#323232"></div>
<svg style="left:1043.8000000000002px;top:130.5px;" width="10" height="10" viewBox="0 0 10 10"><path d="M0 0h9.5L4.75 8z" fill="#b0b0b0"/></svg>
<svg style="left:1062px;top:126.5px;" width="16" height="16" viewBox="0 0 16 16"><path d="M2 6L6 1.5V6z" fill="#9aa7b0"/><path d="M7 1h5v7.5H2V6.8h5z" fill="#9aa7b0"/><rect x="0" y="9" width="15.5" height="7" fill="#4f9a3a"/><text x="7.7" y="15.4" text-anchor="middle" font-size="7" font-weight="bold" fill="#1f2f1a" font-family="Liberation Sans">FTP</text></svg>
<div class="a" style="left:1079.80px;top:130.34px;font-size:12px;line-height:1;color:#bbbbbb;letter-spacing:-0.202px;">GeertFTP (84.22.103.164/geert.webheldworden.nl)</div>
<svg style="left:1061.8000000000002px;top:149.0px;" width="8" height="11" viewBox="0 0 8 11"><path d="M0 0l8 4.6L0 9.2z" fill="#b0b0b0"/></svg>
<svg style="left:1079.8000000000002px;top:149.0px;" width="14" height="11" viewBox="0 0 14 11"><path d="M0 0h5l2 1.8h7V11H0z" fill="#87939b"/></svg>
<div class="a" style="left:1098.80px;top:150.34px;font-size:12px;line-height:1;color:#bbbbbb;letter-spacing:-0.163px;">actions</div>
<svg style="left:1061.8000000000002px;top:170.5px;" width="10" height="10" viewBox="0 0 10 10"><path d="M0 0h9.5L4.75 8z" fill="#b0b0b0"/></svg>
<svg style="left:1079.8000000000002px;top:169.0px;" width="14" height="11" viewBox="0 0 14 11"><path d="M0 0h5l2 1.8h7V11H0z" fill="#87939b"/></svg>
<div class="a" style="left:1098.80px;top:170.34px;font-size:12px;line-height:1;color:#bbbbbb;letter-spacing:-0.173px;">assets</div>
<svg style="left:1079.8000000000002px;top:189.0px;" width="8" height="11" viewBox="0 0 8 11"><path d="M0 0l8 4.6L0 9.2z" fill="#b0b0b0"/></svg>
<svg style="left:1097.8000000000002px;top:189.0px;" width="14" height="11" viewBox="0 0 14 11"><path d="M0 0h5l2 1.8h7V11H0z" fill="#87939b"/></svg>
<div class="a" style="left:1116.80px;top:190.34px;font-size:12px;line-height:1;color:#bbbbbb;letter-spacing:-0.180px;">css</div>
<svg style="left:1079.8000000000002px;top:209.0px;" width="8" height="11" viewBox="0 0 8 11"><path d="M0 0l8 4.6L0 9.2z" fill="#b0b0b0"/></svg>
<svg style="left:1097.8000000000002px;top:209.0px;" width="14" height="11" viewBox="0 0 14 11"><path d="M0 0h5l2 1.8h7V11H0z" fill="#87939b"/></svg>
<div class="a" style="left:1116.80px;top:210.34px;font-size:12px;line-height:1;color:#bbbbbb;letter-spacing:-0.128px;">files</div>
<svg style="left:1079.8000000000002px;top:229.0px;" width="8" height="11" viewBox="0 0 8 11"><path d="M0 0l8 4.6L0 9.2z" fill="#b0b0b0"/></svg>
<svg style="left:1097.8000000000002px;top:229.0px;" width="14" height="11" viewBox="0 0 14 11"><path d="M0 0h5l2 1.8h7V11H0z" fill="#87939b"/></svg>
<div class="a" style="left:1116.80px;top:230.34px;font-size:12px;line-height:1;color:#bbbbbb;letter-spacing:-0.193px;">images</div>
<svg style="left:1079.8000000000002px;top:249.0px;" width="8" height="11" viewBox="0 0 8 11"><path d="M0 0l8 4.6L0 9.2z" fill="#b0b0b0"/></svg>
<svg style="left:1097.8000000000002px;top:249.0px;" width="14" height="11" viewBox="0 0 14 11"><path d="M0 0h5l2 1.8h7V11H0z" fill="#87939b"/></svg>
<div class="a" style="left:1116.80px;top:250.34px;font-size:12px;line-height:1;color:#bbbbbb;letter-spacing:-0.130px;">js</div>
<svg style="left:1079.8000000000002px;top:269.0px;" width="8" height="11" viewBox="0 0 8 11"><path d="M0 0l8 4.6L0 9.2z" fill="#b0b0b0"/></svg>
<svg style="left:1097.8000000000002px;top:269.0px;" width="14" height="11" viewBox="0 0 14 11"><path d="M0 0h5l2 1.8h7V11H0z" fill="#87939b"/></svg>
<div class="a" style="left:1116.80px;top:270.34px;font-size:12px;line-height:1;color:#bbbbbb;letter-spacing:-0.180px;">photos</div>
<svg style="left:1061.8000000000002px;top:289.0px;" width="8" height="11" viewBox="0 0 8 11"><path d="M0 0l8 4.6L0 9.2z" fill="#b0b0b0"/></svg>
<svg style="left:1079.8000000000002px;top:289.0px;" width="14" height="11" viewBox="0 0 14 11"><path d="M0 0h5l2 1.8h7V11H0z" fill="#87939b"/></svg>
<div class="a" style="left:1098.80px;top:290.34px;font-size:12px;line-height:1;color:#bbbbbb;letter-spacing:-0.171px;">classes</div>
<svg style="left:1061.8000000000002px;top:309.0px;" width="8" height="11" viewBox="0 0 8 11"><path d="M0 0l8 4.6L0 9.2z" fill="#b0b0b0"/></svg>
<svg style="left:1079.8000000000002px;top:309.0px;" width="14" height="11" viewBox="0 0 14 11"><path d="M0 0h5l2 1.8h7V11H0z" fill="#87939b"/></svg>
<div class="a" style="left:1098.80px;top:310.34px;font-size:12px;line-height:1;color:#bbbbbb;letter-spacing:-0.175px;">core</div>
<div style="position:absolute;left:1041px;top:325.5px;width:213px;height:20px;background:#0d293e"></div>
<svg style="left:1061.8000000000002px;top:329.0px;" width="8" height="11" viewBox="0 0 8 11"><path d="M0 0l8 4.6L0 9.2z" fill="#b0b0b0"/></svg>
<svg style="left:1079.8000000000002px;top:329.0px;" width="14" height="11" viewBox="0 0 14 11"><path d="M0 0h5l2 1.8h7V11H0z" fill="#87939b"/></svg>
<div class="a" style="left:1098.80px;top:330.34px;font-size:12px;line-height:1;color:#bbbbbb;letter-spacing:-0.153px;">fullcalendar</div>
<svg style="left:1061.8000000000002px;top:349.0px;" width="8" height="11" viewBox="0 0 8 11"><path d="M0 0l8 4.6L0 9.2z" fill="#b0b0b0"/></svg>
<svg style="left:1079.8000000000002px;top:349.0px;" width="14" height="11" viewBox="0 0 14 11"><path d="M0 0h5l2 1.8h7V11H0z" fill="#87939b"/></svg>
<div class="a" style="left:1098.80px;top:350.34px;font-size:12px;line-height:1;color:#bbbbbb;letter-spacing:-0.160px;">functions</div>
<svg style="left:1061.8000000000002px;top:370.5px;" width="10" height="10" viewBox="0 0 10 10"><path d="M0 0h9.5L4.75 8z" fill="#b0b0b0"/></svg>
<svg style="left:1079.8000000000002px;top:369.0px;" width="14" height="11" viewBox="0 0 14 11"><path d="M0 0h5l2 1.8h7V11H0z" fill="#87939b"/></svg>
<div class="a" style="left:1098.80px;top:370.34px;font-size:12px;line-height:1;color:#bbbbbb;letter-spacing:-0.165px;">includes</div>
<svg style="left:1079.8000000000002px;top:389.0px;" width="8" height="11" viewBox="0 0 8 11"><path d="M0 0l8 4.6L0 9.2z" fill="#b0b0b0"/></svg>
<svg style="left:1097.8000000000002px;top:389.0px;" width="14" height="11" viewBox="0 0 14 11"><path d="M0 0h5l2 1.8h7V11H0z" fill="#87939b"/></svg>
<div class="a" style="left:1116.80px;top:390.34px;font-size:12px;line-height:1;color:#bbbbbb;letter-spacing:-0.169px;">queries</div>
<svg style="left:1096.8000000000002px;top:406.5px;" width="16" height="16" viewBox="0 0 16 16"><path d="M2 6L6 1.5V6z" fill="#9aa7b0"/><path d="M7 1h5v7.5H2V6.8h5z" fill="#9aa7b0"/><rect x="0" y="9" width="15.5" height="7" fill="#a68ad8"/><text x="7.7" y="15.4" text-anchor="middle" font-size="7" font-weight="bold" fill="#3a2d50" font-family="Liberation Sans" letter-spacing="-0.2">PHP</text></svg>
<div class="a" style="left:1116.80px;top:410.34px;font-size:12px;line-height:1;color:#bbbbbb;letter-spacing:-0.154px;">footer.inc.php</div>
<svg style="left:1096.8000000000002px;top:426.5px;" width="16" height="16" viewBox="0 0 16 16"><path d="M2 6L6 1.5V6z" fill="#9aa7b0"/><path d="M7 1h5v7.5H2V6.8h5z" fill="#9aa7b0"/><rect x="0" y="9" width="15.5" height="7" fill="#a68ad8"/><text x="7.7" y="15.4" text-anchor="middle" font-size="7" font-weight="bold" fill="#3a2d50" font-family="Liberation Sans" letter-spacing="-0.2">PHP</text></svg>
<div class="a" style="left:1116.80px;top:430.34px;font-size:12px;line-height:1;color:#bbbbbb;letter-spacing:-0.169px;">header.inc.php</div>
<svg style="left:1061.8000000000002px;top:449.0px;" width="8" height="11" viewBox="0 0 8 11"><path d="M0 0l8 4.6L0 9.2z" fill="#b0b0b0"/></svg>
<svg style="left:1079.8000000000002px;top:449.0px;" width="14" height="11" viewBox="0 0 14 11"><path d="M0 0h5l2 1.8h7V11H0z" fill="#87939b"/></svg>
<div class="a" style="left:1098.80px;top:450.34px;font-size:12px;line-height:1;color:#bbbbbb;letter-spacing:-0.153px;">pickerjs</div>
<svg style="left:1061.8000000000002px;top:469.0px;" width="8" height="11" viewBox="0 0 8 11"><path d="M0 0l8 4.6L0 9.2z" fill="#b0b0b0"/></svg>
<svg style="left:1079.8000000000002px;top:469.0px;" width="14" height="11" viewBox="0 0 14 11"><path d="M0 0h5l2 1.8h7V11H0z" fill="#87939b"/></svg>
<div class="a" style="left:1098.80px;top:470.34px;font-size:12px;line-height:1;color:#bbbbbb;letter-spacing:-0.180px;">uploads</div>
<svg style="left:1078.8000000000002px;top:486.5px;" width="16" height="16" viewBox="0 0 16 16"><path d="M2 6L6 1.5V6z" fill="#9aa7b0"/><path d="M7 1h5v7.5H2V6.8h5z" fill="#9aa7b0"/><rect x="0" y="9" width="15.5" height="7" fill="#a68ad8"/><text x="7.7" y="15.4" text-anchor="middle" font-size="7" font-weight="bold" fill="#3a2d50" font-family="Liberation Sans" letter-spacing="-0.2">PHP</text></svg>
<div class="a" style="left:1098.80px;top:490.34px;font-size:12px;line-height:1;color:#bbbbbb;letter-spacing:-0.163px;">administration.php</div>
<svg style="left:1078.8000000000002px;top:506.5px;" width="16" height="16" viewBox="0 0 16 16"><path d="M2 6L6 1.5V6z" fill="#9aa7b0"/><path d="M7 1h5v7.5H2V6.8h5z" fill="#9aa7b0"/><rect x="0" y="9" width="15.5" height="7" fill="#a68ad8"/><text x="7.7" y="15.4" text-anchor="middle" font-size="7" font-weight="bold" fill="#3a2d50" font-family="Liberation Sans" letter-spacing="-0.2">PHP</text></svg>
<div class="a" style="left:1098.80px;top:510.34px;font-size:12px;line-height:1;color:#bbbbbb;letter-spacing:-0.178px;">bookings.php</div>
<svg style="left:1078.8000000000002px;top:526.5px;" width="16" height="16" viewBox="0 0 16 16"><path d="M2 6L6 1.5V6z" fill="#9aa7b0"/><path d="M7 1h5v7.5H2V6.8h5z" fill="#9aa7b0"/><rect x="0" y="9" width="15.5" height="7" fill="#a68ad8"/><text x="7.7" y="15.4" text-anchor="middle" font-size="7" font-weight="bold" fill="#3a2d50" font-family="Liberation Sans" letter-spacing="-0.2">PHP</text></svg>
<div class="a" style="left:1098.80px;top:530.34px;font-size:12px;line-height:1;color:#bbbbbb;letter-spacing:-0.183px;">bookingsbackup.php</div>
<svg style="left:1078.8000000000002px;top:546.5px;" width="16" height="16" viewBox="0 0 16 16"><path d="M2 6L6 1.5V6z" fill="#9aa7b0"/><path d="M7 1h5v7.5H2V6.8h5z" fill="#9aa7b0"/><rect x="0" y="9" width="15.5" height="7" fill="#a68ad8"/><text x="7.7" y="15.4" text-anchor="middle" font-size="7" font-weight="bold" fill="#3a2d50" font-family="Liberation Sans" letter-spacing="-0.2">PHP</text></svg>
<div class="a" style="left:1098.80px;top:550.34px;font-size:12px;line-height:1;color:#bbbbbb;letter-spacing:-0.168px;">charts.php</div>
<svg style="left:1078.8000000000002px;top:566.5px;" width="16" height="16" viewBox="0 0 16 16"><path d="M2 6L6 1.5V6z" fill="#9aa7b0"/><path d="M7 1h5v7.5H2V6.8h5z" fill="#9aa7b0"/><rect x="0" y="9" width="15.5" height="7" fill="#a68ad8"/><text x="7.7" y="15.4" text-anchor="middle" font-size="7" font-weight="bold" fill="#3a2d50" font-family="Liberation Sans" letter-spacing="-0.2">PHP</text></svg>
<div class="a" style="left:1098.80px;top:570.34px;font-size:12px;line-height:1;color:#bbbbbb;letter-spacing:-0.149px;">files.php</div>
<svg style="left:1078.8000000000002px;top:586.5px;" width="16" height="16" viewBox="0 0 16 16"><path d="M2 6L6 1.5V6z" fill="#9aa7b0"/><path d="M7 1h5v7.5H2V6.8h5z" fill="#9aa7b0"/><rect x="0" y="9" width="15.5" height="7" fill="#a68ad8"/><text x="7.7" y="15.4" text-anchor="middle" font-size="7" font-weight="bold" fill="#3a2d50" font-family="Liberation Sans" letter-spacing="-0.2">PHP</text></svg>
<div class="a" style="left:1098.80px;top:590.34px;font-size:12px;line-height:1;color:#bbbbbb;letter-spacing:-0.173px;">index.php</div>
<svg style="left:1078.8000000000002px;top:606.5px;" width="16" height="16" viewBox="0 0 16 16"><path d="M2 6L6 1.5V6z" fill="#9aa7b0"/><path d="M7 1h5v7.5H2V6.8h5z" fill="#9aa7b0"/><rect x="0" y="9" width="15.5" height="7" fill="#a68ad8"/><text x="7.7" y="15.4" text-anchor="middle" font-size="7" font-weight="bold" fill="#3a2d50" font-family="Liberation Sans" letter-spacing="-0.2">PHP</text></svg>
<div class="a" style="left:1098.80px;top:610.34px;font-size:12px;line-height:1;color:#bbbbbb;letter-spacing:-0.178px;">logbook.php</div>
<svg style="left:1078.8000000000002px;top:626.5px;" width="16" height="16" viewBox="0 0 16 16"><path d="M2 6L6 1.5V6z" fill="#9aa7b0"/><path d="M7 1h5v7.5H2V6.8h5z" fill="#9aa7b0"/><rect x="0" y="9" width="15.5" height="7" fill="#a68ad8"/><text x="7.7" y="15.4" text-anchor="middle" font-size="7" font-weight="bold" fill="#3a2d50" font-family="Liberation Sans" letter-spacing="-0.2">PHP</text></svg>
<div class="a" style="left:1098.80px;top:630.34px;font-size:12px;line-height:1;color:#bbbbbb;letter-spacing:-0.168px;">logout.php</div>
<svg style="left:1078.8000000000002px;top:646.5px;" width="16" height="16" viewBox="0 0 16 16"><path d="M2 6L6 1.5V6z" fill="#9aa7b0"/><path d="M7 1h5v7.5H2V6.8h5z" fill="#9aa7b0"/><rect x="0" y="9" width="15.5" height="7" fill="#a68ad8"/><text x="7.7" y="15.4" text-anchor="middle" font-size="7" font-weight="bold" fill="#3a2d50" font-family="Liberation Sans" letter-spacing="-0.2">PHP</text></svg>
<div class="a" style="left:1098.80px;top:650.34px;font-size:12px;line-height:1;color:#bbbbbb;letter-spacing:-0.180px;">navdata.php</div>
<svg style="left:1078.8000000000002px;top:666.5px;" width="16" height="16" viewBox="0 0 16 16"><path d="M2 6L6 1.5V6z" fill="#9aa7b0"/><path d="M7 1h5v7.5H2V6.8h5z" fill="#9aa7b0"/><rect x="0" y="9" width="15.5" height="7" fill="#a68ad8"/><text x="7.7" y="15.4" text-anchor="middle" font-size="7" font-weight="bold" fill="#3a2d50" font-family="Liberation Sans" letter-spacing="-0.2">PHP</text></svg>
<div class="a" style="left:1098.80px;top:670.34px;font-size:12px;line-height:1;color:#bbbbbb;letter-spacing:-0.178px;">photos.php</div>
<svg style="left:1078.8000000000002px;top:686.5px;" width="16" height="16" viewBox="0 0 16 16"><path d="M2 6L6 1.5V6z" fill="#9aa7b0"/><path d="M7 1h5v7.5H2V6.8h5z" fill="#9aa7b0"/><rect x="0" y="9" width="15.5" height="7" fill="#a68ad8"/><text x="7.7" y="15.4" text-anchor="middle" font-size="7" font-weight="bold" fill="#3a2d50" font-family="Liberation Sans" letter-spacing="-0.2">PHP</text></svg>
<div class="a" style="left:1098.80px;top:690.34px;font-size:12px;line-height:1;color:#bbbbbb;letter-spacing:-0.153px;">profile.php</div>
<svg style="left:1078.8000000000002px;top:706.5px;" width="16" height="16" viewBox="0 0 16 16"><path d="M2 6L6 1.5V6z" fill="#9aa7b0"/><path d="M7 1h5v7.5H2V6.8h5z" fill="#9aa7b0"/><rect x="0" y="9" width="15.5" height="7" fill="#a68ad8"/><text x="7.7" y="15.4" text-anchor="middle" font-size="7" font-weight="bold" fill="#3a2d50" font-family="Liberation Sans" letter-spacing="-0.2">PHP</text></svg>
<div class="a" style="left:1098.80px;top:710.34px;font-size:12px;line-height:1;color:#bbbbbb;letter-spacing:-0.191px;">squawks.php</div>
<svg style="left:1078.8000000000002px;top:726.5px;" width="16" height="16" viewBox="0 0 16 16"><path d="M2 6L6 1.5V6z" fill="#9aa7b0"/><path d="M7 1h5v7.5H2V6.8h5z" fill="#9aa7b0"/><rect x="0" y="9" width="15.5" height="7" fill="#a68ad8"/><text x="7.7" y="15.4" text-anchor="middle" font-size="7" font-weight="bold" fill="#3a2d50" font-family="Liberation Sans" letter-spacing="-0.2">PHP</text></svg>
<div class="a" style="left:1098.80px;top:730.34px;font-size:12px;line-height:1;color:#bbbbbb;letter-spacing:-0.149px;">statistics.php</div>
<div style="position:absolute;left:1041px;top:980px;width:149px;height:8px;background:#4b4d4e"></div>
<div style="position:absolute;left:1040px;top:989px;width:214px;height:1px;background:#323232"></div>
<div style="position:absolute;left:1254px;top:58px;width:23px;height:895px;background:#3c3f41;border-left:1px solid #323232"></div>
<div style="position:absolute;left:1254px;top:58px;width:23px;height:104px;background:#2d2f30"></div>
<svg style="left:1259px;top:67px;" width="12" height="12" viewBox="0 0 12 12"><rect x="0" y="0" width="12" height="3" fill="#bbb"/><rect x="0" y="4.5" width="12" height="3" fill="#bbb"/><rect x="0" y="9" width="12" height="3" fill="#bbb"/></svg>
<div class="a" style="left:1272px;top:86.5px;transform:rotate(90deg);transform-origin:0 0;font-size:12px;line-height:1;letter-spacing:-0.548px;color:#e6e6e6">Remote Host</div>
<svg style="left:1259px;top:173px;" width="12" height="12" viewBox="0 0 12 12"><ellipse cx="6" cy="2.5" rx="5.5" ry="2.2" fill="#bbb"/><path d="M0.5 4v7c0 1.2 2.5 2 5.5 2s5.5-.8 5.5-2V4c0 1.2-2.5 2-5.5 2S.5 5.2.5 4z" fill="#bbb"/></svg>
<div class="a" style="left:1272px;top:191.7px;transform:rotate(90deg);transform-origin:0 0;font-size:12px;line-height:1;letter-spacing:-0.596px;color:#bbbbbb">Database</div>
</div><div style="position:absolute;left:0px;top:1040px;width:2560px;height:40px;background:#3a3326"></div>
<div style="position:absolute;left:0px;top:1039px;width:1284px;height:1px;background:#c9b98a"></div>
<svg style="left:16px;top:1052px;" width="17" height="17" viewBox="0 0 17 17"><path d="M0 2.4l7-1v6.8H0zM8 1.2L17 0v8.2H8zM0 9h7v6.9l-7-1zM8 9h9v8l-9-1.3z" fill="#fff"/></svg>
<svg style="left:64px;top:1052px;" width="17" height="17" viewBox="0 0 17 17"><circle cx="10.5" cy="6.5" r="5.5" fill="none" stroke="#fff" stroke-width="1.3"/><path d="M6.5 10.5L1 16" stroke="#fff" stroke-width="1.5"/></svg>
<svg style="left:112px;top:1052px;" width="17" height="17" viewBox="0 0 17 17"><rect x="1" y="4" width="11" height="9" fill="none" stroke="#fff" stroke-width="1.2"/><path d="M0 1.5h13M0 15.5h13M15 0v17" stroke="#fff" stroke-width="1.2"/><rect x="14.4" y="4" width="1.4" height="3" fill="#fff"/></svg>
<svg style="left:160px;top:1050px;" width="21" height="19" viewBox="0 0 21 19"><path d="M0 2h7l2 2h12v15H0z" fill="#f5d67a"/><path d="M0 5h21v14H0z" fill="#ffe08a"/><rect x="5" y="11" width="11" height="2.5" fill="#2b93e6"/><rect x="5" y="11" width="2.5" height="8" fill="#2b93e6"/><rect x="13.5" y="11" width="2.5" height="8" fill="#2b93e6"/></svg>
<svg style="left:208px;top:1048px;" width="23" height="23" viewBox="0 0 23 23"><circle cx="11.5" cy="11.5" r="11.5" fill="#db4437"/><path d="M11.5 11.5L1.5 5.7A11.5 11.5 0 0 0 11.5 23z" fill="#0f9d58"/><path d="M11.5 11.5L11.5 23A11.5 11.5 0 0 0 21.5 5.7z" fill="#ffcd40"/><circle cx="11.5" cy="11.5" r="5" fill="#fff"/><circle cx="11.5" cy="11.5" r="4" fill="#4285f4"/></svg>
<div style="position:absolute;left:200px;top:1078px;width:40px;height:2px;background:#d9a8e8"></div>
<svg style="left:256px;top:1048px;" width="25" height="23" viewBox="0 0 25 23"><rect x="8" y="1" width="16" height="14" fill="#28a8ea"/><rect x="8" y="1" width="8" height="7" fill="#0078d4"/><rect x="16" y="8" width="8" height="7" fill="#0364b8"/><path d="M8 12h16v10H8z" fill="#1490df"/><rect x="0" y="5" width="13" height="13" rx="1" fill="#0a5bb5"/><text x="6.5" y="15.5" text-anchor="middle" font-size="10" font-weight="bold" fill="#fff" font-family="Liberation Sans">O</text></svg>
<svg style="left:305px;top:1048px;" width="26" height="24" viewBox="0 0 26 24"><circle cx="13" cy="3.5" r="3.5" fill="#7b83eb"/><circle cx="21" cy="6" r="2.6" fill="#5059c9"/><rect x="17" y="9" width="8" height="10" rx="3" fill="#5059c9"/><rect x="8" y="8" width="12" height="14" rx="4" fill="#7b83eb"/><rect x="0" y="6" width="12" height="12" rx="1" fill="#4b53bc"/><text x="6" y="15.5" text-anchor="middle" font-size="9" font-weight="bold" fill="#fff" font-family="Liberation Sans">T</text><circle cx="20" cy="19" r="4.5" fill="#92c353" stroke="#3a3326" stroke-width="1"/><path d="M17.8 19l1.6 1.6 3-3" fill="none" stroke="#fff" stroke-width="1.2"/></svg>
<div style="position:absolute;left:298px;top:1078px;width:40px;height:2px;background:#d9a8e8"></div>
<svg style="left:354px;top:1048px;" width="25" height="25" viewBox="0 0 25 25"><path d="M12.5 0L25 12.5 12.5 25 0 12.5z" fill="#3ebd7a"/><path d="M12.5 4L21 12.5 12.5 21 4 12.5z" fill="none" stroke="#c9f2da" stroke-width="1.2"/><path d="M8 12.5h9M12.5 8v9" stroke="#c9f2da" stroke-width="1"/></svg>
<svg style="left:405px;top:1049px;" width="22" height="22" viewBox="0 0 22 22"><circle cx="11" cy="11" r="11" fill="#0d57d6"/><circle cx="11" cy="9" r="3.6" fill="#fff"/><rect x="10" y="11" width="2" height="6" fill="#fff"/><circle cx="11" cy="9" r="1.4" fill="#0d57d6"/></svg>
<svg style="left:454px;top:1049px;" width="22" height="22" viewBox="0 0 22 22"><circle cx="11" cy="11" r="11" fill="#f4ede4"/><rect x="9" y="4" width="2.6" height="7" rx="1.3" fill="#36c5f0"/><rect x="4" y="9.5" width="7" height="2.6" rx="1.3" fill="#36c5f0"/><rect x="12.5" y="4" width="2.6" height="7" rx="1.3" fill="#2eb67d"/><rect x="11" y="9.5" width="7" height="2.6" rx="1.3" fill="#ecb22e"/><rect x="9" y="11" width="2.6" height="7" rx="1.3" fill="#e01e5a"/><rect x="4" y="13" width="7" height="2.6" rx="1.3" fill="#e01e5a"/><rect x="12.5" y="12.5" width="2.6" height="6" rx="1.3" fill="#ecb22e"/></svg>
<svg style="left:502px;top:1048px;" width="23" height="23" viewBox="0 0 23 23"><circle cx="11.5" cy="11.5" r="9" fill="none" stroke="#1e88e5" stroke-width="5"/><path d="M11.5 2.5A9 9 0 0 1 20.5 11.5" fill="none" stroke="#43a047" stroke-width="5"/><path d="M20.5 11.5A9 9 0 0 1 11.5 20.5" fill="none" stroke="#fdd835" stroke-width="5"/><path d="M11.5 20.5A9 9 0 0 1 2.5 11.5" fill="none" stroke="#e53935" stroke-width="5"/></svg>
<svg style="left:552px;top:1048px;" width="23" height="23" viewBox="0 0 23 23"><rect x="0" y="0" width="8" height="7" fill="#1976d2"/><path d="M7 9a4 4 0 0 1 8 0v3" fill="none" stroke="#bdbdbd" stroke-width="2"/><rect x="5" y="11" width="12" height="10" fill="#9e9e9e"/><path d="M17 14l6 5-6 4z" fill="#2e7d32"/></svg>
<svg style="left:600px;top:1048px;" width="23" height="23" viewBox="0 0 23 23"><circle cx="11.5" cy="11.5" r="11.5" fill="#1ed760"/><path d="M5 8c4-1.3 9-1 13 1M6 12c3.5-1 7-.6 10 .8M7 15.5c2.5-.7 5-.4 7.3.6" fill="none" stroke="#191414" stroke-width="1.8" stroke-linecap="round"/></svg>
<div style="position:absolute;left:637px;top:1040px;width:44px;height:40px;background:#5a5246"></div>
<div style="position:absolute;left:682px;top:1040px;width:1px;height:40px;background:#6a6256"></div>
<div style="position:absolute;left:637px;top:1078px;width:47px;height:2px;background:#d9a8e8"></div>
<svg style="left:648px;top:1047px;" width="24" height="24" viewBox="0 0 24 24"><path d="M3 3L14 0l10 4-1 15-9 5L1 19z" fill="#b14df3"/><path d="M3 3L14 0 8 11z" fill="#ff45a0"/><path d="M24 4l-1 15-8-9z" fill="#7b5cf8"/><rect x="5" y="5" width="14.5" height="14.5" fill="#000"/><text x="6.3" y="12.8" font-size="7.6" font-weight="bold" fill="#fff" font-family="Liberation Sans">PS</text><rect x="6.5" y="16.2" width="5" height="1.2" fill="#fff"/></svg>
<svg style="left:698px;top:1047px;" width="24" height="24" viewBox="0 0 24 24"><path d="M3 3L14 0l10 4-1 15-9 5L1 19z" fill="#3b7cf0"/><path d="M1 19l2-16 4 10z" fill="#f98a1e"/><path d="M1 19l13 5-6-10z" fill="#a74be0"/><path d="M3 3L14 0 8 11z" fill="#fe3a6b"/><path d="M24 4l-1 15-8-9z" fill="#2f7bf5"/><rect x="5" y="5" width="14.5" height="14.5" fill="#000"/><text x="6.3" y="12.8" font-size="7.6" font-weight="bold" fill="#fff" font-family="Liberation Sans">IJ</text><rect x="6.5" y="16.2" width="5" height="1.2" fill="#fff"/></svg>
<svg style="left:747px;top:1047px;" width="24" height="24" viewBox="0 0 24 24"><path d="M3 3L14 0l10 4-1 15-9 5L1 19z" fill="#2bd4a2"/><path d="M1 19l13 5 9-5-10-4z" fill="#9d73f5"/><path d="M3 3L14 0 8 11z" fill="#37c8b0"/><path d="M24 4l-1 15-8-9z" fill="#a471f8"/><rect x="5" y="5" width="14.5" height="14.5" fill="#000"/><text x="6.3" y="12.8" font-size="7.6" font-weight="bold" fill="#fff" font-family="Liberation Sans">DG</text><rect x="6.5" y="16.2" width="5" height="1.2" fill="#fff"/></svg>
<svg style="left:796px;top:1048px;" width="23" height="23" viewBox="0 0 23 23"><path d="M17 0l6 3v17l-6 3-10-9-5 4-2-1V6l2-1 5 4z" fill="#1f9cf0"/><path d="M17 6l-6 5.5 6 5.5z" fill="#3a3326"/><path d="M2 8l4 3.5-4 3.5z" fill="#3a3326"/></svg>
<svg style="left:845px;top:1049px;" width="24" height="22" viewBox="0 0 24 22"><rect x="1" y="1" width="22" height="16" fill="#23313c" stroke="#5fb3d3" stroke-width="1.4"/><path d="M9 5h7M9 5v8h7M9 9h5" fill="none" stroke="#5fb3d3" stroke-width="1.4"/><path d="M8 20h8" stroke="#5fb3d3" stroke-width="1.4"/></svg>
<svg style="left:895px;top:1048px;" width="24" height="24" viewBox="0 0 24 24"><rect x="0" y="0" width="24" height="24" rx="3" fill="#fb7a24"/><path d="M6 6c3 0 4 3 6 6s3 6 6 6M18 6c-3 0-4 3-6 6s-3 6-6 6" fill="none" stroke="#fff" stroke-width="2.4"/></svg>
<svg style="left:943px;top:1048px;" width="24" height="24" viewBox="0 0 24 24"><rect x="0" y="0" width="24" height="24" rx="2" fill="#bf0000"/><text x="3" y="19" font-size="17" font-style="italic" font-weight="bold" fill="#fff" font-family="Liberation Sans">Fz</text></svg>
<div style="position:absolute;left:935px;top:1078px;width:40px;height:2px;background:#d9a8e8"></div>
<svg style="left:2305px;top:1055px;" width="12" height="8" viewBox="0 0 12 8"><path d="M0.5 7L6 1.5 11.5 7" fill="none" stroke="#fff" stroke-width="1.2"/></svg>
<svg style="left:2327px;top:1054px;" width="17" height="11" viewBox="0 0 17 11"><path d="M4 11a3.5 3.5 0 0 1-.5-7A5 5 0 0 1 13 3.5 3.8 3.8 0 0 1 13.5 11z" fill="#2b8ad8"/><path d="M4 11h10a3 3 0 0 0 0-6 4 4 0 0 0-7.5 1A3 3 0 0 0 4 11z" fill="#3ba4f0"/></svg>
<svg style="left:2352px;top:1051px;" width="15" height="16" viewBox="0 0 15 16"><rect x="5" y="2" width="9.5" height="9" fill="none" stroke="#fff" stroke-width="1.2"/><path d="M9.5 11v3M6.5 14.5h6" stroke="#fff" stroke-width="1.2"/><rect x="0" y="6" width="7" height="5" fill="#fff"/><path d="M1.5 6V4a2 2 0 0 1 4 0" fill="none" stroke="#fff" stroke-width="1.2"/></svg>
<svg style="left:2375px;top:1051px;" width="15" height="15" viewBox="0 0 15 15"><circle cx="7.5" cy="7.5" r="5.5" fill="none" stroke="#1e88e5" stroke-width="4"/><path d="M7.5 2A5.5 5.5 0 0 1 13 7.5" fill="none" stroke="#43a047" stroke-width="4"/><path d="M13 7.5A5.5 5.5 0 0 1 7.5 13" fill="none" stroke="#fdd835" stroke-width="4"/><path d="M7.5 13A5.5 5.5 0 0 1 2 7.5" fill="none" stroke="#e53935" stroke-width="4"/></svg>
<svg style="left:2399px;top:1053px;" width="17" height="14" viewBox="0 0 17 14"><rect x="4" y="1" width="12.5" height="9" fill="none" stroke="#fff" stroke-width="1.1"/><path d="M10 10v2.5M7 13h6M1.5 1v12M0.5 1h3" stroke="#fff" stroke-width="1.1"/><rect x="0.5" y="0.5" width="3" height="2.5" fill="#fff"/></svg>
<svg style="left:2422px;top:1053px;" width="16" height="13" viewBox="0 0 16 13"><path d="M1 4.5h3L7.5 1v11L4 8.5H1z" fill="none" stroke="#fff" stroke-width="1.1"/><path d="M10 4.5l4.5 4.5M14.5 4.5L10 9" stroke="#fff" stroke-width="1.1"/></svg>
<div class="a" style="left:2461.00px;top:1044.24px;font-size:12px;line-height:1;color:#fff;letter-spacing:-0.606px;">09:58</div>
<div class="a" style="left:2446.00px;top:1062.34px;font-size:12px;line-height:1;color:#fff;letter-spacing:-0.250px;">21-11-2019</div>
<svg style="left:2519px;top:1052px;" width="17" height="16" viewBox="0 0 17 16"><path d="M0.5 0.5h16v12H11l-2.5 3-2.5-3H.5z" fill="#fff"/><path d="M3 3.5h11M3 6.5h11M3 9.5h7" stroke="#3a3326" stroke-width="1"/></svg>
<div style="position:absolute;left:2555px;top:1040px;width:1px;height:40px;background:#6d655a"></div>
</body></html>
